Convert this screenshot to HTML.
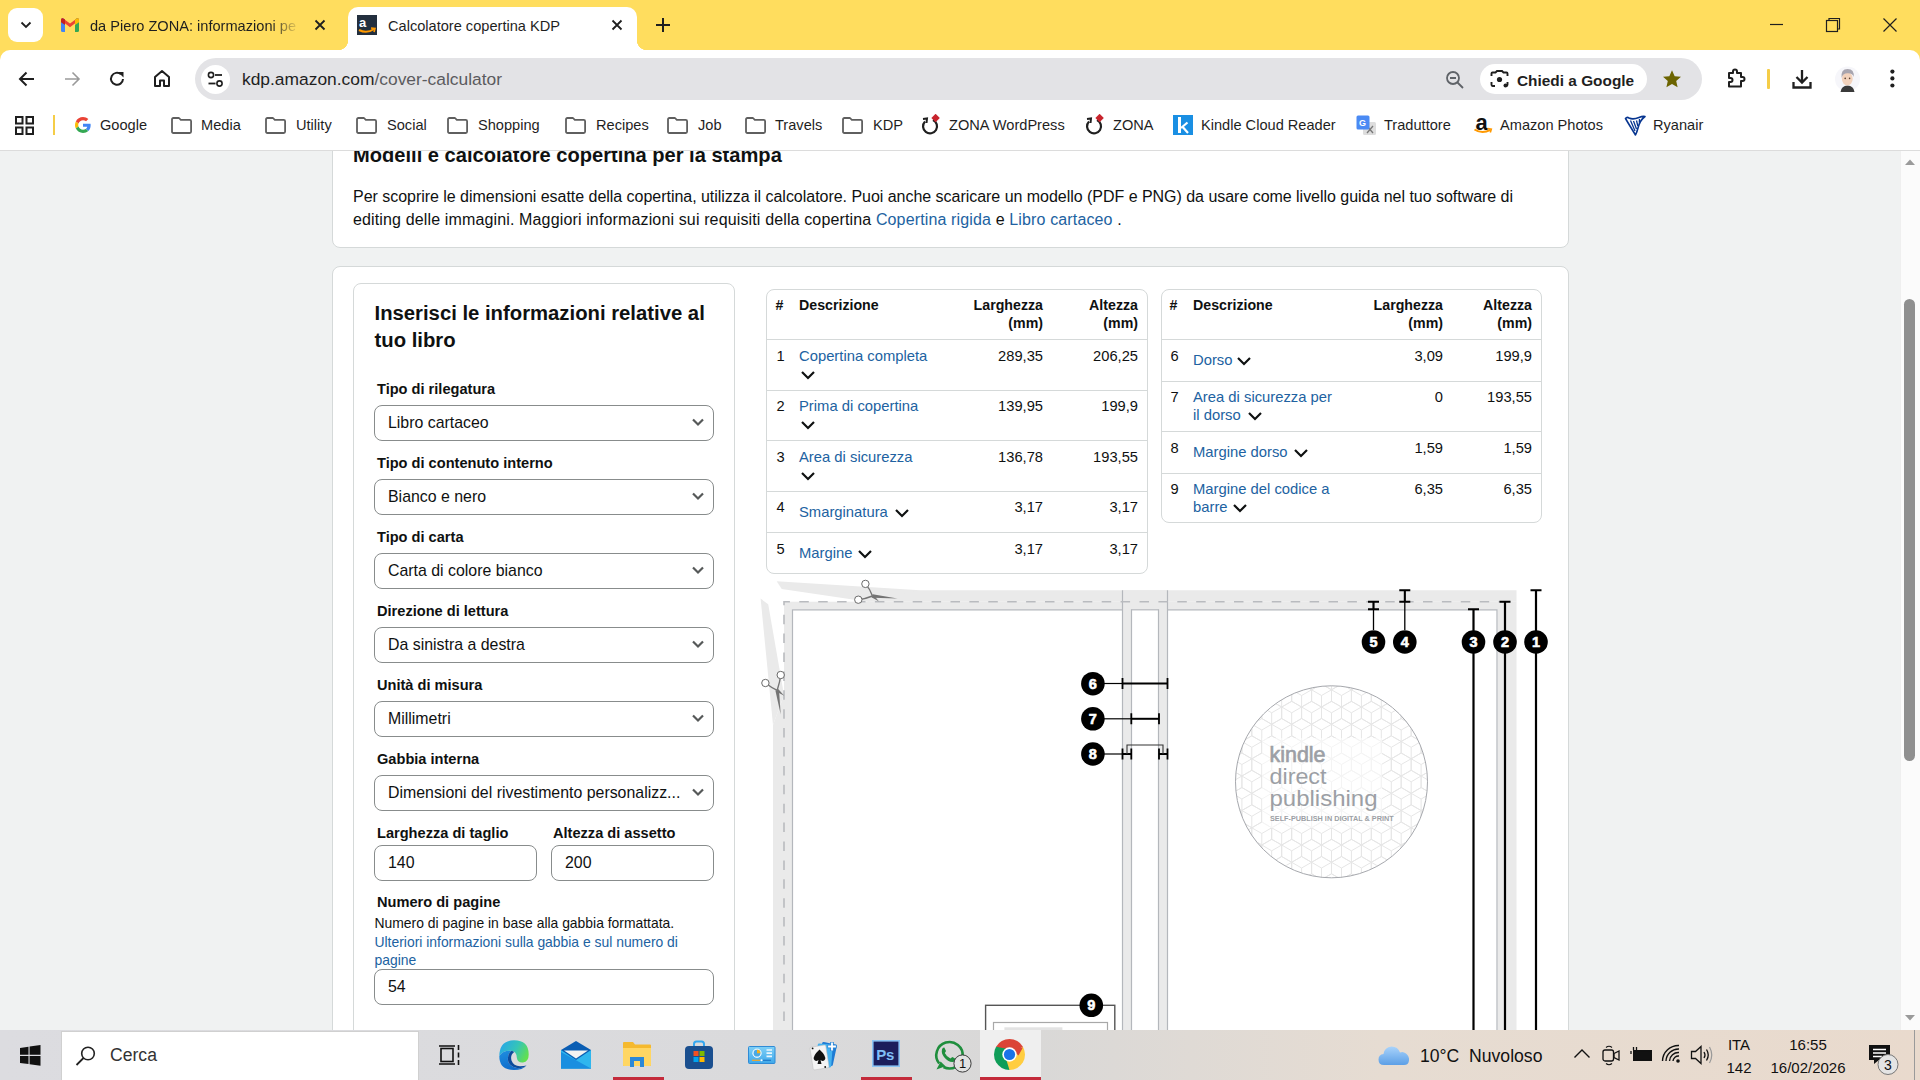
<!DOCTYPE html>
<html><head><meta charset="utf-8">
<style>
*{box-sizing:border-box;margin:0;padding:0}
html,body{width:1920px;height:1080px;overflow:hidden;font-family:"Liberation Sans",sans-serif;background:#fff;position:relative}
.abs{position:absolute}
.t{white-space:nowrap}
.tabtxt{font-size:14.6px;line-height:18px;color:#1f1f1f;white-space:nowrap}
.bm{font-size:14.6px;line-height:18px;color:#1f1f1f;white-space:nowrap;top:116px}
</style></head><body>
<div class="abs" style="left:0;top:151px;width:1900px;height:879px;background:#F0F2F2"></div>
<div class="abs" style="left:332px;top:60px;width:1237px;height:188px;background:#fff;border:1px solid #D5D9D9;border-radius:8px"></div>
<div class="abs" style="left:332px;top:266px;width:1237px;height:900px;background:#fff;border:1px solid #D5D9D9;border-radius:8px"></div>
<div class="abs" style="left:353px;top:283px;width:382px;height:900px;background:#fff;border:1px solid #D5D9D9;border-radius:8px"></div>
<div class="abs t" style="left:353px;top:141.54px;font-size:20.1px;line-height:26px;font-weight:700;color:#0F1111;">Modelli e calcolatore copertina per la stampa</div>
<div class="abs t" style="left:353px;top:186.16px;font-size:16px;line-height:21px;font-weight:400;color:#0F1111;"><span style='letter-spacing:-0.03px'>Per scoprire le dimensioni esatte della copertina, utilizza il calcolatore. Puoi anche scaricare un modello (PDF e PNG) da usare come livello guida nel tuo software di</span></div>
<div class="abs t" style="left:353px;top:208.66px;font-size:16px;line-height:21px;font-weight:400;color:#0F1111;"><span style="letter-spacing:0.14px">editing delle immagini. Maggiori informazioni sui requisiti della copertina <span style="color:#2162A1">Copertina rigida</span> e <span style="color:#2162A1">Libro cartaceo</span> .</span></div>
<div class="abs t" style="left:374.5px;top:300.07px;font-size:20.3px;line-height:26px;font-weight:700;color:#0F1111;">Inserisci le informazioni relative al</div>
<div class="abs t" style="left:374.5px;top:327.07px;font-size:20.3px;line-height:26px;font-weight:700;color:#0F1111;">tuo libro</div>
<div class="abs t" style="left:377px;top:380.34px;font-size:14.6px;line-height:19px;font-weight:700;color:#0F1111;">Tipo di rilegatura</div>
<div class="abs" style="left:374px;top:405px;width:340px;height:36px;background:#fff;border:1px solid #888C8C;border-radius:8px"></div>
<div class="abs t" style="left:388px;top:412.29px;font-size:15.9px;line-height:21px;font-weight:400;color:#0F1111;">Libro cartaceo</div>
<svg class="abs" style="left:691px;top:417px" width="14" height="10" viewBox="0 0 14 10"><path d="M2 2.5 L7 7.5 L12 2.5" fill="none" stroke="#565959" stroke-width="2.2"/></svg>
<div class="abs t" style="left:377px;top:454.34px;font-size:14.6px;line-height:19px;font-weight:700;color:#0F1111;">Tipo di contenuto interno</div>
<div class="abs" style="left:374px;top:479px;width:340px;height:36px;background:#fff;border:1px solid #888C8C;border-radius:8px"></div>
<div class="abs t" style="left:388px;top:486.29px;font-size:15.9px;line-height:21px;font-weight:400;color:#0F1111;">Bianco e nero</div>
<svg class="abs" style="left:691px;top:491px" width="14" height="10" viewBox="0 0 14 10"><path d="M2 2.5 L7 7.5 L12 2.5" fill="none" stroke="#565959" stroke-width="2.2"/></svg>
<div class="abs t" style="left:377px;top:528.34px;font-size:14.6px;line-height:19px;font-weight:700;color:#0F1111;">Tipo di carta</div>
<div class="abs" style="left:374px;top:553px;width:340px;height:36px;background:#fff;border:1px solid #888C8C;border-radius:8px"></div>
<div class="abs t" style="left:388px;top:560.29px;font-size:15.9px;line-height:21px;font-weight:400;color:#0F1111;">Carta di colore bianco</div>
<svg class="abs" style="left:691px;top:565px" width="14" height="10" viewBox="0 0 14 10"><path d="M2 2.5 L7 7.5 L12 2.5" fill="none" stroke="#565959" stroke-width="2.2"/></svg>
<div class="abs t" style="left:377px;top:602.34px;font-size:14.6px;line-height:19px;font-weight:700;color:#0F1111;">Direzione di lettura</div>
<div class="abs" style="left:374px;top:627px;width:340px;height:36px;background:#fff;border:1px solid #888C8C;border-radius:8px"></div>
<div class="abs t" style="left:388px;top:634.29px;font-size:15.9px;line-height:21px;font-weight:400;color:#0F1111;">Da sinistra a destra</div>
<svg class="abs" style="left:691px;top:639px" width="14" height="10" viewBox="0 0 14 10"><path d="M2 2.5 L7 7.5 L12 2.5" fill="none" stroke="#565959" stroke-width="2.2"/></svg>
<div class="abs t" style="left:377px;top:676.34px;font-size:14.6px;line-height:19px;font-weight:700;color:#0F1111;">Unità di misura</div>
<div class="abs" style="left:374px;top:701px;width:340px;height:36px;background:#fff;border:1px solid #888C8C;border-radius:8px"></div>
<div class="abs t" style="left:388px;top:708.29px;font-size:15.9px;line-height:21px;font-weight:400;color:#0F1111;">Millimetri</div>
<svg class="abs" style="left:691px;top:713px" width="14" height="10" viewBox="0 0 14 10"><path d="M2 2.5 L7 7.5 L12 2.5" fill="none" stroke="#565959" stroke-width="2.2"/></svg>
<div class="abs t" style="left:377px;top:750.34px;font-size:14.6px;line-height:19px;font-weight:700;color:#0F1111;">Gabbia interna</div>
<div class="abs" style="left:374px;top:775px;width:340px;height:36px;background:#fff;border:1px solid #888C8C;border-radius:8px"></div>
<div class="abs t" style="left:388px;top:782.29px;font-size:15.9px;line-height:21px;font-weight:400;color:#0F1111;">Dimensioni del rivestimento personalizz...</div>
<svg class="abs" style="left:691px;top:787px" width="14" height="10" viewBox="0 0 14 10"><path d="M2 2.5 L7 7.5 L12 2.5" fill="none" stroke="#565959" stroke-width="2.2"/></svg>
<div class="abs t" style="left:377px;top:824.34px;font-size:14.6px;line-height:19px;font-weight:700;color:#0F1111;">Larghezza di taglio</div>
<div class="abs t" style="left:553px;top:824.34px;font-size:14.6px;line-height:19px;font-weight:700;color:#0F1111;">Altezza di assetto</div>
<div class="abs" style="left:374px;top:845px;width:163px;height:36px;background:#fff;border:1px solid #888C8C;border-radius:8px"></div>
<div class="abs" style="left:551px;top:845px;width:163px;height:36px;background:#fff;border:1px solid #888C8C;border-radius:8px"></div>
<div class="abs t" style="left:388px;top:851.99px;font-size:15.9px;line-height:21px;font-weight:400;color:#0F1111;">140</div>
<div class="abs t" style="left:565px;top:851.99px;font-size:15.9px;line-height:21px;font-weight:400;color:#0F1111;">200</div>
<div class="abs t" style="left:377px;top:893.44px;font-size:14.6px;line-height:19px;font-weight:700;color:#0F1111;">Numero di pagine</div>
<div class="abs t" style="left:374.5px;top:914.18px;font-size:13.9px;line-height:18px;font-weight:400;color:#0F1111;">Numero di pagine in base alla gabbia formattata.</div>
<div class="abs t" style="left:374.5px;top:932.88px;font-size:13.9px;line-height:18px;font-weight:400;color:#2162A1;">Ulteriori informazioni sulla gabbia e sul numero di</div>
<div class="abs t" style="left:374.5px;top:950.88px;font-size:13.9px;line-height:18px;font-weight:400;color:#2162A1;">pagine</div>
<div class="abs" style="left:374px;top:969px;width:340px;height:36px;background:#fff;border:1px solid #888C8C;border-radius:8px"></div>
<div class="abs t" style="left:388px;top:975.99px;font-size:15.9px;line-height:21px;font-weight:400;color:#0F1111;">54</div>
<div class="abs" style="left:766px;top:289px;width:382px;height:285px;background:#fff;border:1px solid #D5D9D9;border-radius:8px"></div>
<div class="abs" style="left:766px;top:339px;width:382px;height:1px;background:#D5D9D9"></div>
<div class="abs" style="left:766px;top:390px;width:382px;height:1px;background:#D5D9D9"></div>
<div class="abs" style="left:766px;top:440px;width:382px;height:1px;background:#D5D9D9"></div>
<div class="abs" style="left:766px;top:491px;width:382px;height:1px;background:#D5D9D9"></div>
<div class="abs" style="left:766px;top:532px;width:382px;height:1px;background:#D5D9D9"></div>
<div class="abs t" style="left:775.5px;top:295.88px;font-size:14.2px;line-height:18px;font-weight:700;color:#0F1111;">#</div>
<div class="abs t" style="left:799px;top:295.88px;font-size:14.2px;line-height:18px;font-weight:700;color:#0F1111;">Descrizione</div>
<div class="abs t" style="left:923px;width:120px;text-align:right;top:295.88px;font-size:14.2px;line-height:18px;font-weight:700;color:#0F1111;">Larghezza</div>
<div class="abs t" style="left:923px;width:120px;text-align:right;top:313.68px;font-size:14.2px;line-height:18px;font-weight:700;color:#0F1111;">(mm)</div>
<div class="abs t" style="left:1048px;width:90px;text-align:right;top:295.88px;font-size:14.2px;line-height:18px;font-weight:700;color:#0F1111;">Altezza</div>
<div class="abs t" style="left:1048px;width:90px;text-align:right;top:313.68px;font-size:14.2px;line-height:18px;font-weight:700;color:#0F1111;">(mm)</div>
<div class="abs t" style="left:776.5px;top:346.91px;font-size:14.7px;line-height:19px;font-weight:400;color:#0F1111;">1</div>
<div class="abs t" style="left:799px;top:346.87px;font-size:14.8px;line-height:19px;font-weight:400;color:#2162A1;">Copertina completa</div>
<svg class="abs" style="left:800px;top:370px" width="16" height="10" viewBox="0 0 16 10"><path d="M2 2 L8 8 L14 2" fill="none" stroke="#0F1111" stroke-width="2.2"/></svg>
<div class="abs t" style="left:923px;width:120px;text-align:right;top:346.91px;font-size:14.7px;line-height:19px;font-weight:400;color:#0F1111;">289,35</div>
<div class="abs t" style="left:1048px;width:90px;text-align:right;top:346.91px;font-size:14.7px;line-height:19px;font-weight:400;color:#0F1111;">206,25</div>
<div class="abs t" style="left:776.5px;top:396.91px;font-size:14.7px;line-height:19px;font-weight:400;color:#0F1111;">2</div>
<div class="abs t" style="left:799px;top:396.87px;font-size:14.8px;line-height:19px;font-weight:400;color:#2162A1;">Prima di copertina</div>
<svg class="abs" style="left:800px;top:420px" width="16" height="10" viewBox="0 0 16 10"><path d="M2 2 L8 8 L14 2" fill="none" stroke="#0F1111" stroke-width="2.2"/></svg>
<div class="abs t" style="left:923px;width:120px;text-align:right;top:396.91px;font-size:14.7px;line-height:19px;font-weight:400;color:#0F1111;">139,95</div>
<div class="abs t" style="left:1048px;width:90px;text-align:right;top:396.91px;font-size:14.7px;line-height:19px;font-weight:400;color:#0F1111;">199,9</div>
<div class="abs t" style="left:776.5px;top:447.91px;font-size:14.7px;line-height:19px;font-weight:400;color:#0F1111;">3</div>
<div class="abs t" style="left:799px;top:447.87px;font-size:14.8px;line-height:19px;font-weight:400;color:#2162A1;">Area di sicurezza</div>
<svg class="abs" style="left:800px;top:471px" width="16" height="10" viewBox="0 0 16 10"><path d="M2 2 L8 8 L14 2" fill="none" stroke="#0F1111" stroke-width="2.2"/></svg>
<div class="abs t" style="left:923px;width:120px;text-align:right;top:447.91px;font-size:14.7px;line-height:19px;font-weight:400;color:#0F1111;">136,78</div>
<div class="abs t" style="left:1048px;width:90px;text-align:right;top:447.91px;font-size:14.7px;line-height:19px;font-weight:400;color:#0F1111;">193,55</div>
<div class="abs t" style="left:776.5px;top:497.91px;font-size:14.7px;line-height:19px;font-weight:400;color:#0F1111;">4</div>
<div class="abs t" style="left:799px;top:503.37px;font-size:14.8px;line-height:19px;font-weight:400;color:#2162A1;">Smarginatura</div>
<svg class="abs" style="left:894px;top:508px" width="16" height="10" viewBox="0 0 16 10"><path d="M2 2 L8 8 L14 2" fill="none" stroke="#0F1111" stroke-width="2.2"/></svg>
<div class="abs t" style="left:923px;width:120px;text-align:right;top:497.91px;font-size:14.7px;line-height:19px;font-weight:400;color:#0F1111;">3,17</div>
<div class="abs t" style="left:1048px;width:90px;text-align:right;top:497.91px;font-size:14.7px;line-height:19px;font-weight:400;color:#0F1111;">3,17</div>
<div class="abs t" style="left:776.5px;top:539.51px;font-size:14.7px;line-height:19px;font-weight:400;color:#0F1111;">5</div>
<div class="abs t" style="left:799px;top:543.67px;font-size:14.8px;line-height:19px;font-weight:400;color:#2162A1;">Margine</div>
<svg class="abs" style="left:857px;top:549px" width="16" height="10" viewBox="0 0 16 10"><path d="M2 2 L8 8 L14 2" fill="none" stroke="#0F1111" stroke-width="2.2"/></svg>
<div class="abs t" style="left:923px;width:120px;text-align:right;top:539.51px;font-size:14.7px;line-height:19px;font-weight:400;color:#0F1111;">3,17</div>
<div class="abs t" style="left:1048px;width:90px;text-align:right;top:539.51px;font-size:14.7px;line-height:19px;font-weight:400;color:#0F1111;">3,17</div>
<div class="abs" style="left:1161px;top:289px;width:381px;height:234px;background:#fff;border:1px solid #D5D9D9;border-radius:8px"></div>
<div class="abs" style="left:1161px;top:339px;width:381px;height:1px;background:#D5D9D9"></div>
<div class="abs" style="left:1161px;top:381px;width:381px;height:1px;background:#D5D9D9"></div>
<div class="abs" style="left:1161px;top:431px;width:381px;height:1px;background:#D5D9D9"></div>
<div class="abs" style="left:1161px;top:473px;width:381px;height:1px;background:#D5D9D9"></div>
<div class="abs t" style="left:1169.5px;top:295.88px;font-size:14.2px;line-height:18px;font-weight:700;color:#0F1111;">#</div>
<div class="abs t" style="left:1193px;top:295.88px;font-size:14.2px;line-height:18px;font-weight:700;color:#0F1111;">Descrizione</div>
<div class="abs t" style="left:1323px;width:120px;text-align:right;top:295.88px;font-size:14.2px;line-height:18px;font-weight:700;color:#0F1111;">Larghezza</div>
<div class="abs t" style="left:1323px;width:120px;text-align:right;top:313.68px;font-size:14.2px;line-height:18px;font-weight:700;color:#0F1111;">(mm)</div>
<div class="abs t" style="left:1442px;width:90px;text-align:right;top:295.88px;font-size:14.2px;line-height:18px;font-weight:700;color:#0F1111;">Altezza</div>
<div class="abs t" style="left:1442px;width:90px;text-align:right;top:313.68px;font-size:14.2px;line-height:18px;font-weight:700;color:#0F1111;">(mm)</div>
<div class="abs t" style="left:1170.5px;top:346.91px;font-size:14.7px;line-height:19px;font-weight:400;color:#0F1111;">6</div>
<div class="abs t" style="left:1193px;top:350.57px;font-size:14.8px;line-height:19px;font-weight:400;color:#2162A1;">Dorso</div>
<svg class="abs" style="left:1236px;top:356px" width="16" height="10" viewBox="0 0 16 10"><path d="M2 2 L8 8 L14 2" fill="none" stroke="#0F1111" stroke-width="2.2"/></svg>
<div class="abs t" style="left:1323px;width:120px;text-align:right;top:346.91px;font-size:14.7px;line-height:19px;font-weight:400;color:#0F1111;">3,09</div>
<div class="abs t" style="left:1442px;width:90px;text-align:right;top:346.91px;font-size:14.7px;line-height:19px;font-weight:400;color:#0F1111;">199,9</div>
<div class="abs t" style="left:1170.5px;top:387.61px;font-size:14.7px;line-height:19px;font-weight:400;color:#0F1111;">7</div>
<div class="abs t" style="left:1193px;top:387.87px;font-size:14.8px;line-height:19px;font-weight:400;color:#2162A1;">Area di sicurezza per</div>
<div class="abs t" style="left:1193px;top:405.57px;font-size:14.8px;line-height:19px;font-weight:400;color:#2162A1;">il dorso</div>
<svg class="abs" style="left:1247px;top:411px" width="16" height="10" viewBox="0 0 16 10"><path d="M2 2 L8 8 L14 2" fill="none" stroke="#0F1111" stroke-width="2.2"/></svg>
<div class="abs t" style="left:1323px;width:120px;text-align:right;top:387.61px;font-size:14.7px;line-height:19px;font-weight:400;color:#0F1111;">0</div>
<div class="abs t" style="left:1442px;width:90px;text-align:right;top:387.61px;font-size:14.7px;line-height:19px;font-weight:400;color:#0F1111;">193,55</div>
<div class="abs t" style="left:1170.5px;top:438.71px;font-size:14.7px;line-height:19px;font-weight:400;color:#0F1111;">8</div>
<div class="abs t" style="left:1193px;top:442.57px;font-size:14.8px;line-height:19px;font-weight:400;color:#2162A1;">Margine dorso</div>
<svg class="abs" style="left:1293px;top:448px" width="16" height="10" viewBox="0 0 16 10"><path d="M2 2 L8 8 L14 2" fill="none" stroke="#0F1111" stroke-width="2.2"/></svg>
<div class="abs t" style="left:1323px;width:120px;text-align:right;top:438.71px;font-size:14.7px;line-height:19px;font-weight:400;color:#0F1111;">1,59</div>
<div class="abs t" style="left:1442px;width:90px;text-align:right;top:438.71px;font-size:14.7px;line-height:19px;font-weight:400;color:#0F1111;">1,59</div>
<div class="abs t" style="left:1170.5px;top:479.91px;font-size:14.7px;line-height:19px;font-weight:400;color:#0F1111;">9</div>
<div class="abs t" style="left:1193px;top:479.87px;font-size:14.8px;line-height:19px;font-weight:400;color:#2162A1;">Margine del codice a</div>
<div class="abs t" style="left:1193px;top:497.87px;font-size:14.8px;line-height:19px;font-weight:400;color:#2162A1;">barre</div>
<svg class="abs" style="left:1232px;top:503px" width="16" height="10" viewBox="0 0 16 10"><path d="M2 2 L8 8 L14 2" fill="none" stroke="#0F1111" stroke-width="2.2"/></svg>
<div class="abs t" style="left:1323px;width:120px;text-align:right;top:479.91px;font-size:14.7px;line-height:19px;font-weight:400;color:#0F1111;">6,35</div>
<div class="abs t" style="left:1442px;width:90px;text-align:right;top:479.91px;font-size:14.7px;line-height:19px;font-weight:400;color:#0F1111;">6,35</div>
<svg class="abs" style="left:755px;top:575px" width="813" height="455" viewBox="755 575 813 455"><rect x="784" y="601.7" width="732.5" height="440" fill="#EAEAEA"/><polygon points="860,590.3 1516.5,590.3 1516.5,601.7 868,601.7" fill="#EAEAEA"/><polygon points="773,725 784,695 784,1040 773,1040" fill="#EAEAEA"/><polygon points="776.7,581.2 920,590.3 868,601.7 781.7,588.9" fill="#EAEAEA"/><polygon points="760.6,598.6 768.2,604.2 784,695 773,725" fill="#EAEAEA"/><rect x="792" y="609.3" width="705.5" height="440" fill="#fff"/><path d="M792.5 1040 V609.8 H1497 V1040" fill="none" stroke="#B4B7BC" stroke-width="1.2"/><rect x="1122.3" y="590.3" width="45.5" height="450" fill="#EAEAEA"/><rect x="1131.5" y="609.3" width="26.5" height="440" fill="#fff"/><path d="M1122.5 590.3 V1040 M1167.5 590.3 V1040 M1131.5 609.3 V1040 M1158.5 609.3 V1040" stroke="#B4B7BC" stroke-width="1.2"/><path d="M1131.5 609.8 H1158.5" stroke="#B4B7BC" stroke-width="1.2"/><path d="M784 1040 V601.7 H1505 V1040" fill="none" stroke="#B9BBBF" stroke-width="1.6" stroke-dasharray="9.5 9.4"/><polygon points="872.3,597.8 897.5,598.5 872.7,594.2" fill="#747474"/><polygon points="871.5,597.2 879.0,601.4 873.5,594.8" fill="#747474"/><path d="M865.4 583.9 Q870.0 589.0 872.5 596.0 M858.3 599.7 Q865.4 598.9 872.5 596.0" fill="none" stroke="#747474" stroke-width="1.4"/><circle cx="865.4" cy="583.9" r="3.7" fill="#fff" stroke="#6a6a6a" stroke-width="1"/><circle cx="858.3" cy="599.7" r="3.7" fill="#fff" stroke="#6a6a6a" stroke-width="1"/><polygon points="775.4,690.6 780.7,714.6 779.0,690.0" fill="#747474"/><polygon points="776.2,691.6 784.2,695.8 778.2,689.0" fill="#747474"/><path d="M780.7 675.0 Q780.0 681.6 777.2 690.3 M765.4 683.0 Q771.3 687.6 777.2 690.3" fill="none" stroke="#747474" stroke-width="1.4"/><circle cx="780.7" cy="675" r="3.7" fill="#fff" stroke="#6a6a6a" stroke-width="1"/><circle cx="765.4" cy="683" r="3.7" fill="#fff" stroke="#6a6a6a" stroke-width="1"/><path d="M1104 683.5 H1122.5" stroke="#000" stroke-width="1.2"/><path d="M1122.5 683.5 H1167.5" stroke="#000" stroke-width="2"/><path d="M1122.5 678 V689 M1167.5 678 V689" stroke="#000" stroke-width="1.8"/><path d="M1104 718.8 H1131.3" stroke="#000" stroke-width="1.2"/><path d="M1131.3 718.8 H1159" stroke="#000" stroke-width="2"/><path d="M1131.3 713.3 V724.3 M1159 713.3 V724.3" stroke="#000" stroke-width="1.8"/><path d="M1104 754 H1122.5" stroke="#000" stroke-width="1.2"/><path d="M1122.5 754 H1131.3 M1159 754 H1167.5" stroke="#000" stroke-width="2"/><path d="M1122.5 748.5 V759.5 M1131.3 748.5 V759.5 M1159 748.5 V759.5 M1167.5 748.5 V759.5" stroke="#000" stroke-width="1.8"/><path d="M1127 754 V745 H1163 V754" fill="none" stroke="#333" stroke-width="1.1"/><circle cx="1092.9" cy="683.7" r="11.8" fill="#000"/><text x="1092.9" y="688.8000000000001" text-anchor="middle" font-family="Liberation Sans" font-weight="700" font-size="14.5" fill="#fff" stroke="#fff" stroke-width="0.6">6</text><circle cx="1092.9" cy="718.8" r="11.8" fill="#000"/><text x="1092.9" y="723.9" text-anchor="middle" font-family="Liberation Sans" font-weight="700" font-size="14.5" fill="#fff" stroke="#fff" stroke-width="0.6">7</text><circle cx="1092.9" cy="754" r="11.8" fill="#000"/><text x="1092.9" y="759.1" text-anchor="middle" font-family="Liberation Sans" font-weight="700" font-size="14.5" fill="#fff" stroke="#fff" stroke-width="0.6">8</text><path d="M1373.5 630 V601.7" stroke="#000" stroke-width="1.3"/><path d="M1373.5 601.7 V609.3" stroke="#000" stroke-width="2"/><path d="M1368 601.7 H1379 M1368 609.3 H1379" stroke="#000" stroke-width="2"/><path d="M1404.8 630 V590.3" stroke="#000" stroke-width="1.3"/><path d="M1404.8 590.3 V601.7" stroke="#000" stroke-width="2"/><path d="M1399.3 590.3 H1410.3 M1399.3 601.7 H1410.3" stroke="#000" stroke-width="2"/><path d="M1473.5 609.3 V1040 M1505 601.7 V1040 M1536 590.3 V1040" stroke="#000" stroke-width="2.2"/><path d="M1468 609.3 H1479 M1499.5 601.7 H1510.5 M1530.5 590.3 H1541.5" stroke="#000" stroke-width="2"/><circle cx="1373.5" cy="642" r="11.8" fill="#000"/><text x="1373.5" y="647.1" text-anchor="middle" font-family="Liberation Sans" font-weight="700" font-size="14.5" fill="#fff" stroke="#fff" stroke-width="0.6">5</text><circle cx="1404.8" cy="642" r="11.8" fill="#000"/><text x="1404.8" y="647.1" text-anchor="middle" font-family="Liberation Sans" font-weight="700" font-size="14.5" fill="#fff" stroke="#fff" stroke-width="0.6">4</text><circle cx="1473.5" cy="642" r="11.8" fill="#000"/><text x="1473.5" y="647.1" text-anchor="middle" font-family="Liberation Sans" font-weight="700" font-size="14.5" fill="#fff" stroke="#fff" stroke-width="0.6">3</text><circle cx="1505" cy="642" r="11.8" fill="#000"/><text x="1505" y="647.1" text-anchor="middle" font-family="Liberation Sans" font-weight="700" font-size="14.5" fill="#fff" stroke="#fff" stroke-width="0.6">2</text><circle cx="1536" cy="642" r="11.8" fill="#000"/><text x="1536" y="647.1" text-anchor="middle" font-family="Liberation Sans" font-weight="700" font-size="14.5" fill="#fff" stroke="#fff" stroke-width="0.6">1</text><rect x="985.6" y="1005.3" width="129.2" height="60" fill="#fff" stroke="#555" stroke-width="1.4"/><rect x="993.5" y="1022.5" width="114" height="40" fill="#fff" stroke="#A8A8A8" stroke-width="1.2"/><rect x="1004.4" y="1027.3" width="58" height="5" fill="#E3E3E3"/><circle cx="1091.3" cy="1005.3" r="11.8" fill="#000"/><text x="1091.3" y="1010.4" text-anchor="middle" font-family="Liberation Sans" font-weight="700" font-size="14.5" fill="#fff" stroke="#fff" stroke-width="0.6">9</text><clipPath id="lc"><circle cx="1331.5" cy="781.8" r="96"/></clipPath><g clip-path="url(#lc)" fill="none" stroke="#E6E6E6" stroke-width="1"><polygon points="1221.9,684.0 1212.0,689.8 1202.0,684.0 1202.0,672.5 1212.0,666.8 1221.9,672.5"/><path d="M1212.0 678.3 L1212.0 689.8 M1212.0 678.3 L1221.9 672.5 M1212.0 678.3 L1202.0 672.5"/><polygon points="1241.9,684.0 1231.9,689.8 1221.9,684.0 1221.9,672.5 1231.9,666.8 1241.9,672.5"/><path d="M1231.9 678.3 L1231.9 689.8 M1231.9 678.3 L1241.9 672.5 M1231.9 678.3 L1221.9 672.5"/><polygon points="1261.8,684.0 1251.8,689.8 1241.9,684.0 1241.9,672.5 1251.8,666.8 1261.8,672.5"/><path d="M1251.8 678.3 L1251.8 689.8 M1251.8 678.3 L1261.8 672.5 M1251.8 678.3 L1241.9 672.5"/><polygon points="1281.7,684.0 1271.7,689.8 1261.8,684.0 1261.8,672.5 1271.7,666.8 1281.7,672.5"/><path d="M1271.7 678.3 L1271.7 689.8 M1271.7 678.3 L1281.7 672.5 M1271.7 678.3 L1261.8 672.5"/><polygon points="1301.6,684.0 1291.7,689.8 1281.7,684.0 1281.7,672.5 1291.7,666.8 1301.6,672.5"/><path d="M1291.7 678.3 L1291.7 689.8 M1291.7 678.3 L1301.6 672.5 M1291.7 678.3 L1281.7 672.5"/><polygon points="1321.5,684.0 1311.6,689.8 1301.6,684.0 1301.6,672.5 1311.6,666.8 1321.5,672.5"/><path d="M1311.6 678.3 L1311.6 689.8 M1311.6 678.3 L1321.5 672.5 M1311.6 678.3 L1301.6 672.5"/><polygon points="1341.5,684.0 1331.5,689.8 1321.5,684.0 1321.5,672.5 1331.5,666.8 1341.5,672.5"/><path d="M1331.5 678.3 L1331.5 689.8 M1331.5 678.3 L1341.5 672.5 M1331.5 678.3 L1321.5 672.5"/><polygon points="1361.4,684.0 1351.4,689.8 1341.5,684.0 1341.5,672.5 1351.4,666.8 1361.4,672.5"/><path d="M1351.4 678.3 L1351.4 689.8 M1351.4 678.3 L1361.4 672.5 M1351.4 678.3 L1341.5 672.5"/><polygon points="1381.3,684.0 1371.3,689.8 1361.4,684.0 1361.4,672.5 1371.3,666.8 1381.3,672.5"/><path d="M1371.3 678.3 L1371.3 689.8 M1371.3 678.3 L1381.3 672.5 M1371.3 678.3 L1361.4 672.5"/><polygon points="1401.2,684.0 1391.3,689.8 1381.3,684.0 1381.3,672.5 1391.3,666.8 1401.2,672.5"/><path d="M1391.3 678.3 L1391.3 689.8 M1391.3 678.3 L1401.2 672.5 M1391.3 678.3 L1381.3 672.5"/><polygon points="1421.1,684.0 1411.2,689.8 1401.2,684.0 1401.2,672.5 1411.2,666.8 1421.1,672.5"/><path d="M1411.2 678.3 L1411.2 689.8 M1411.2 678.3 L1421.1 672.5 M1411.2 678.3 L1401.2 672.5"/><polygon points="1441.1,684.0 1431.1,689.8 1421.1,684.0 1421.1,672.5 1431.1,666.8 1441.1,672.5"/><path d="M1431.1 678.3 L1431.1 689.8 M1431.1 678.3 L1441.1 672.5 M1431.1 678.3 L1421.1 672.5"/><polygon points="1461.0,684.0 1451.0,689.8 1441.1,684.0 1441.1,672.5 1451.0,666.8 1461.0,672.5"/><path d="M1451.0 678.3 L1451.0 689.8 M1451.0 678.3 L1461.0 672.5 M1451.0 678.3 L1441.1 672.5"/><polygon points="1231.9,701.3 1221.9,707.0 1212.0,701.3 1212.0,689.8 1221.9,684.0 1231.9,689.8"/><path d="M1221.9 695.5 L1221.9 707.0 M1221.9 695.5 L1231.9 689.8 M1221.9 695.5 L1212.0 689.8"/><polygon points="1251.8,701.3 1241.9,707.0 1231.9,701.3 1231.9,689.8 1241.9,684.0 1251.8,689.8"/><path d="M1241.9 695.5 L1241.9 707.0 M1241.9 695.5 L1251.8 689.8 M1241.9 695.5 L1231.9 689.8"/><polygon points="1271.7,701.3 1261.8,707.0 1251.8,701.3 1251.8,689.8 1261.8,684.0 1271.7,689.8"/><path d="M1261.8 695.5 L1261.8 707.0 M1261.8 695.5 L1271.7 689.8 M1261.8 695.5 L1251.8 689.8"/><polygon points="1291.7,701.3 1281.7,707.0 1271.7,701.3 1271.7,689.8 1281.7,684.0 1291.7,689.8"/><path d="M1281.7 695.5 L1281.7 707.0 M1281.7 695.5 L1291.7 689.8 M1281.7 695.5 L1271.7 689.8"/><polygon points="1311.6,701.3 1301.6,707.0 1291.7,701.3 1291.7,689.8 1301.6,684.0 1311.6,689.8"/><path d="M1301.6 695.5 L1301.6 707.0 M1301.6 695.5 L1311.6 689.8 M1301.6 695.5 L1291.7 689.8"/><polygon points="1331.5,701.3 1321.5,707.0 1311.6,701.3 1311.6,689.8 1321.5,684.0 1331.5,689.8"/><path d="M1321.5 695.5 L1321.5 707.0 M1321.5 695.5 L1331.5 689.8 M1321.5 695.5 L1311.6 689.8"/><polygon points="1351.4,701.3 1341.5,707.0 1331.5,701.3 1331.5,689.8 1341.5,684.0 1351.4,689.8"/><path d="M1341.5 695.5 L1341.5 707.0 M1341.5 695.5 L1351.4 689.8 M1341.5 695.5 L1331.5 689.8"/><polygon points="1371.3,701.3 1361.4,707.0 1351.4,701.3 1351.4,689.8 1361.4,684.0 1371.3,689.8"/><path d="M1361.4 695.5 L1361.4 707.0 M1361.4 695.5 L1371.3 689.8 M1361.4 695.5 L1351.4 689.8"/><polygon points="1391.3,701.3 1381.3,707.0 1371.3,701.3 1371.3,689.8 1381.3,684.0 1391.3,689.8"/><path d="M1381.3 695.5 L1381.3 707.0 M1381.3 695.5 L1391.3 689.8 M1381.3 695.5 L1371.3 689.8"/><polygon points="1411.2,701.3 1401.2,707.0 1391.3,701.3 1391.3,689.8 1401.2,684.0 1411.2,689.8"/><path d="M1401.2 695.5 L1401.2 707.0 M1401.2 695.5 L1411.2 689.8 M1401.2 695.5 L1391.3 689.8"/><polygon points="1431.1,701.3 1421.1,707.0 1411.2,701.3 1411.2,689.8 1421.1,684.0 1431.1,689.8"/><path d="M1421.1 695.5 L1421.1 707.0 M1421.1 695.5 L1431.1 689.8 M1421.1 695.5 L1411.2 689.8"/><polygon points="1451.0,701.3 1441.1,707.0 1431.1,701.3 1431.1,689.8 1441.1,684.0 1451.0,689.8"/><path d="M1441.1 695.5 L1441.1 707.0 M1441.1 695.5 L1451.0 689.8 M1441.1 695.5 L1431.1 689.8"/><polygon points="1470.9,701.3 1461.0,707.0 1451.0,701.3 1451.0,689.8 1461.0,684.0 1470.9,689.8"/><path d="M1461.0 695.5 L1461.0 707.0 M1461.0 695.5 L1470.9 689.8 M1461.0 695.5 L1451.0 689.8"/><polygon points="1221.9,718.5 1212.0,724.3 1202.0,718.5 1202.0,707.0 1212.0,701.3 1221.9,707.0"/><path d="M1212.0 712.8 L1212.0 724.3 M1212.0 712.8 L1221.9 707.0 M1212.0 712.8 L1202.0 707.0"/><polygon points="1241.9,718.5 1231.9,724.3 1221.9,718.5 1221.9,707.0 1231.9,701.3 1241.9,707.0"/><path d="M1231.9 712.8 L1231.9 724.3 M1231.9 712.8 L1241.9 707.0 M1231.9 712.8 L1221.9 707.0"/><polygon points="1261.8,718.5 1251.8,724.3 1241.9,718.5 1241.9,707.0 1251.8,701.3 1261.8,707.0"/><path d="M1251.8 712.8 L1251.8 724.3 M1251.8 712.8 L1261.8 707.0 M1251.8 712.8 L1241.9 707.0"/><polygon points="1281.7,718.5 1271.7,724.3 1261.8,718.5 1261.8,707.0 1271.7,701.3 1281.7,707.0"/><path d="M1271.7 712.8 L1271.7 724.3 M1271.7 712.8 L1281.7 707.0 M1271.7 712.8 L1261.8 707.0"/><polygon points="1301.6,718.5 1291.7,724.3 1281.7,718.5 1281.7,707.0 1291.7,701.3 1301.6,707.0"/><path d="M1291.7 712.8 L1291.7 724.3 M1291.7 712.8 L1301.6 707.0 M1291.7 712.8 L1281.7 707.0"/><polygon points="1321.5,718.5 1311.6,724.3 1301.6,718.5 1301.6,707.0 1311.6,701.3 1321.5,707.0"/><path d="M1311.6 712.8 L1311.6 724.3 M1311.6 712.8 L1321.5 707.0 M1311.6 712.8 L1301.6 707.0"/><polygon points="1341.5,718.5 1331.5,724.3 1321.5,718.5 1321.5,707.0 1331.5,701.3 1341.5,707.0"/><path d="M1331.5 712.8 L1331.5 724.3 M1331.5 712.8 L1341.5 707.0 M1331.5 712.8 L1321.5 707.0"/><polygon points="1361.4,718.5 1351.4,724.3 1341.5,718.5 1341.5,707.0 1351.4,701.3 1361.4,707.0"/><path d="M1351.4 712.8 L1351.4 724.3 M1351.4 712.8 L1361.4 707.0 M1351.4 712.8 L1341.5 707.0"/><polygon points="1381.3,718.5 1371.3,724.3 1361.4,718.5 1361.4,707.0 1371.3,701.3 1381.3,707.0"/><path d="M1371.3 712.8 L1371.3 724.3 M1371.3 712.8 L1381.3 707.0 M1371.3 712.8 L1361.4 707.0"/><polygon points="1401.2,718.5 1391.3,724.3 1381.3,718.5 1381.3,707.0 1391.3,701.3 1401.2,707.0"/><path d="M1391.3 712.8 L1391.3 724.3 M1391.3 712.8 L1401.2 707.0 M1391.3 712.8 L1381.3 707.0"/><polygon points="1421.1,718.5 1411.2,724.3 1401.2,718.5 1401.2,707.0 1411.2,701.3 1421.1,707.0"/><path d="M1411.2 712.8 L1411.2 724.3 M1411.2 712.8 L1421.1 707.0 M1411.2 712.8 L1401.2 707.0"/><polygon points="1441.1,718.5 1431.1,724.3 1421.1,718.5 1421.1,707.0 1431.1,701.3 1441.1,707.0"/><path d="M1431.1 712.8 L1431.1 724.3 M1431.1 712.8 L1441.1 707.0 M1431.1 712.8 L1421.1 707.0"/><polygon points="1461.0,718.5 1451.0,724.3 1441.1,718.5 1441.1,707.0 1451.0,701.3 1461.0,707.0"/><path d="M1451.0 712.8 L1451.0 724.3 M1451.0 712.8 L1461.0 707.0 M1451.0 712.8 L1441.1 707.0"/><polygon points="1231.9,735.8 1221.9,741.5 1212.0,735.8 1212.0,724.3 1221.9,718.5 1231.9,724.3"/><path d="M1221.9 730.0 L1221.9 741.5 M1221.9 730.0 L1231.9 724.3 M1221.9 730.0 L1212.0 724.3"/><polygon points="1251.8,735.8 1241.9,741.5 1231.9,735.8 1231.9,724.3 1241.9,718.5 1251.8,724.3"/><path d="M1241.9 730.0 L1241.9 741.5 M1241.9 730.0 L1251.8 724.3 M1241.9 730.0 L1231.9 724.3"/><polygon points="1271.7,735.8 1261.8,741.5 1251.8,735.8 1251.8,724.3 1261.8,718.5 1271.7,724.3"/><path d="M1261.8 730.0 L1261.8 741.5 M1261.8 730.0 L1271.7 724.3 M1261.8 730.0 L1251.8 724.3"/><polygon points="1291.7,735.8 1281.7,741.5 1271.7,735.8 1271.7,724.3 1281.7,718.5 1291.7,724.3"/><path d="M1281.7 730.0 L1281.7 741.5 M1281.7 730.0 L1291.7 724.3 M1281.7 730.0 L1271.7 724.3"/><polygon points="1311.6,735.8 1301.6,741.5 1291.7,735.8 1291.7,724.3 1301.6,718.5 1311.6,724.3"/><path d="M1301.6 730.0 L1301.6 741.5 M1301.6 730.0 L1311.6 724.3 M1301.6 730.0 L1291.7 724.3"/><polygon points="1331.5,735.8 1321.5,741.5 1311.6,735.8 1311.6,724.3 1321.5,718.5 1331.5,724.3"/><path d="M1321.5 730.0 L1321.5 741.5 M1321.5 730.0 L1331.5 724.3 M1321.5 730.0 L1311.6 724.3"/><polygon points="1351.4,735.8 1341.5,741.5 1331.5,735.8 1331.5,724.3 1341.5,718.5 1351.4,724.3"/><path d="M1341.5 730.0 L1341.5 741.5 M1341.5 730.0 L1351.4 724.3 M1341.5 730.0 L1331.5 724.3"/><polygon points="1371.3,735.8 1361.4,741.5 1351.4,735.8 1351.4,724.3 1361.4,718.5 1371.3,724.3"/><path d="M1361.4 730.0 L1361.4 741.5 M1361.4 730.0 L1371.3 724.3 M1361.4 730.0 L1351.4 724.3"/><polygon points="1391.3,735.8 1381.3,741.5 1371.3,735.8 1371.3,724.3 1381.3,718.5 1391.3,724.3"/><path d="M1381.3 730.0 L1381.3 741.5 M1381.3 730.0 L1391.3 724.3 M1381.3 730.0 L1371.3 724.3"/><polygon points="1411.2,735.8 1401.2,741.5 1391.3,735.8 1391.3,724.3 1401.2,718.5 1411.2,724.3"/><path d="M1401.2 730.0 L1401.2 741.5 M1401.2 730.0 L1411.2 724.3 M1401.2 730.0 L1391.3 724.3"/><polygon points="1431.1,735.8 1421.1,741.5 1411.2,735.8 1411.2,724.3 1421.1,718.5 1431.1,724.3"/><path d="M1421.1 730.0 L1421.1 741.5 M1421.1 730.0 L1431.1 724.3 M1421.1 730.0 L1411.2 724.3"/><polygon points="1451.0,735.8 1441.1,741.5 1431.1,735.8 1431.1,724.3 1441.1,718.5 1451.0,724.3"/><path d="M1441.1 730.0 L1441.1 741.5 M1441.1 730.0 L1451.0 724.3 M1441.1 730.0 L1431.1 724.3"/><polygon points="1470.9,735.8 1461.0,741.5 1451.0,735.8 1451.0,724.3 1461.0,718.5 1470.9,724.3"/><path d="M1461.0 730.0 L1461.0 741.5 M1461.0 730.0 L1470.9 724.3 M1461.0 730.0 L1451.0 724.3"/><polygon points="1221.9,753.0 1212.0,758.8 1202.0,753.0 1202.0,741.5 1212.0,735.8 1221.9,741.5"/><path d="M1212.0 747.3 L1212.0 758.8 M1212.0 747.3 L1221.9 741.5 M1212.0 747.3 L1202.0 741.5"/><polygon points="1241.9,753.0 1231.9,758.8 1221.9,753.0 1221.9,741.5 1231.9,735.8 1241.9,741.5"/><path d="M1231.9 747.3 L1231.9 758.8 M1231.9 747.3 L1241.9 741.5 M1231.9 747.3 L1221.9 741.5"/><polygon points="1261.8,753.0 1251.8,758.8 1241.9,753.0 1241.9,741.5 1251.8,735.8 1261.8,741.5"/><path d="M1251.8 747.3 L1251.8 758.8 M1251.8 747.3 L1261.8 741.5 M1251.8 747.3 L1241.9 741.5"/><polygon points="1281.7,753.0 1271.7,758.8 1261.8,753.0 1261.8,741.5 1271.7,735.8 1281.7,741.5"/><path d="M1271.7 747.3 L1271.7 758.8 M1271.7 747.3 L1281.7 741.5 M1271.7 747.3 L1261.8 741.5"/><polygon points="1301.6,753.0 1291.7,758.8 1281.7,753.0 1281.7,741.5 1291.7,735.8 1301.6,741.5"/><path d="M1291.7 747.3 L1291.7 758.8 M1291.7 747.3 L1301.6 741.5 M1291.7 747.3 L1281.7 741.5"/><polygon points="1321.5,753.0 1311.6,758.8 1301.6,753.0 1301.6,741.5 1311.6,735.8 1321.5,741.5"/><path d="M1311.6 747.3 L1311.6 758.8 M1311.6 747.3 L1321.5 741.5 M1311.6 747.3 L1301.6 741.5"/><polygon points="1341.5,753.0 1331.5,758.8 1321.5,753.0 1321.5,741.5 1331.5,735.8 1341.5,741.5"/><path d="M1331.5 747.3 L1331.5 758.8 M1331.5 747.3 L1341.5 741.5 M1331.5 747.3 L1321.5 741.5"/><polygon points="1361.4,753.0 1351.4,758.8 1341.5,753.0 1341.5,741.5 1351.4,735.8 1361.4,741.5"/><path d="M1351.4 747.3 L1351.4 758.8 M1351.4 747.3 L1361.4 741.5 M1351.4 747.3 L1341.5 741.5"/><polygon points="1381.3,753.0 1371.3,758.8 1361.4,753.0 1361.4,741.5 1371.3,735.8 1381.3,741.5"/><path d="M1371.3 747.3 L1371.3 758.8 M1371.3 747.3 L1381.3 741.5 M1371.3 747.3 L1361.4 741.5"/><polygon points="1401.2,753.0 1391.3,758.8 1381.3,753.0 1381.3,741.5 1391.3,735.8 1401.2,741.5"/><path d="M1391.3 747.3 L1391.3 758.8 M1391.3 747.3 L1401.2 741.5 M1391.3 747.3 L1381.3 741.5"/><polygon points="1421.1,753.0 1411.2,758.8 1401.2,753.0 1401.2,741.5 1411.2,735.8 1421.1,741.5"/><path d="M1411.2 747.3 L1411.2 758.8 M1411.2 747.3 L1421.1 741.5 M1411.2 747.3 L1401.2 741.5"/><polygon points="1441.1,753.0 1431.1,758.8 1421.1,753.0 1421.1,741.5 1431.1,735.8 1441.1,741.5"/><path d="M1431.1 747.3 L1431.1 758.8 M1431.1 747.3 L1441.1 741.5 M1431.1 747.3 L1421.1 741.5"/><polygon points="1461.0,753.0 1451.0,758.8 1441.1,753.0 1441.1,741.5 1451.0,735.8 1461.0,741.5"/><path d="M1451.0 747.3 L1451.0 758.8 M1451.0 747.3 L1461.0 741.5 M1451.0 747.3 L1441.1 741.5"/><polygon points="1231.9,770.3 1221.9,776.0 1212.0,770.3 1212.0,758.8 1221.9,753.0 1231.9,758.8"/><path d="M1221.9 764.5 L1221.9 776.0 M1221.9 764.5 L1231.9 758.8 M1221.9 764.5 L1212.0 758.8"/><polygon points="1251.8,770.3 1241.9,776.0 1231.9,770.3 1231.9,758.8 1241.9,753.0 1251.8,758.8"/><path d="M1241.9 764.5 L1241.9 776.0 M1241.9 764.5 L1251.8 758.8 M1241.9 764.5 L1231.9 758.8"/><polygon points="1271.7,770.3 1261.8,776.0 1251.8,770.3 1251.8,758.8 1261.8,753.0 1271.7,758.8"/><path d="M1261.8 764.5 L1261.8 776.0 M1261.8 764.5 L1271.7 758.8 M1261.8 764.5 L1251.8 758.8"/><polygon points="1291.7,770.3 1281.7,776.0 1271.7,770.3 1271.7,758.8 1281.7,753.0 1291.7,758.8"/><path d="M1281.7 764.5 L1281.7 776.0 M1281.7 764.5 L1291.7 758.8 M1281.7 764.5 L1271.7 758.8"/><polygon points="1311.6,770.3 1301.6,776.0 1291.7,770.3 1291.7,758.8 1301.6,753.0 1311.6,758.8"/><path d="M1301.6 764.5 L1301.6 776.0 M1301.6 764.5 L1311.6 758.8 M1301.6 764.5 L1291.7 758.8"/><polygon points="1331.5,770.3 1321.5,776.0 1311.6,770.3 1311.6,758.8 1321.5,753.0 1331.5,758.8"/><path d="M1321.5 764.5 L1321.5 776.0 M1321.5 764.5 L1331.5 758.8 M1321.5 764.5 L1311.6 758.8"/><polygon points="1351.4,770.3 1341.5,776.0 1331.5,770.3 1331.5,758.8 1341.5,753.0 1351.4,758.8"/><path d="M1341.5 764.5 L1341.5 776.0 M1341.5 764.5 L1351.4 758.8 M1341.5 764.5 L1331.5 758.8"/><polygon points="1371.3,770.3 1361.4,776.0 1351.4,770.3 1351.4,758.8 1361.4,753.0 1371.3,758.8"/><path d="M1361.4 764.5 L1361.4 776.0 M1361.4 764.5 L1371.3 758.8 M1361.4 764.5 L1351.4 758.8"/><polygon points="1391.3,770.3 1381.3,776.0 1371.3,770.3 1371.3,758.8 1381.3,753.0 1391.3,758.8"/><path d="M1381.3 764.5 L1381.3 776.0 M1381.3 764.5 L1391.3 758.8 M1381.3 764.5 L1371.3 758.8"/><polygon points="1411.2,770.3 1401.2,776.0 1391.3,770.3 1391.3,758.8 1401.2,753.0 1411.2,758.8"/><path d="M1401.2 764.5 L1401.2 776.0 M1401.2 764.5 L1411.2 758.8 M1401.2 764.5 L1391.3 758.8"/><polygon points="1431.1,770.3 1421.1,776.0 1411.2,770.3 1411.2,758.8 1421.1,753.0 1431.1,758.8"/><path d="M1421.1 764.5 L1421.1 776.0 M1421.1 764.5 L1431.1 758.8 M1421.1 764.5 L1411.2 758.8"/><polygon points="1451.0,770.3 1441.1,776.0 1431.1,770.3 1431.1,758.8 1441.1,753.0 1451.0,758.8"/><path d="M1441.1 764.5 L1441.1 776.0 M1441.1 764.5 L1451.0 758.8 M1441.1 764.5 L1431.1 758.8"/><polygon points="1470.9,770.3 1461.0,776.0 1451.0,770.3 1451.0,758.8 1461.0,753.0 1470.9,758.8"/><path d="M1461.0 764.5 L1461.0 776.0 M1461.0 764.5 L1470.9 758.8 M1461.0 764.5 L1451.0 758.8"/><polygon points="1221.9,787.5 1212.0,793.3 1202.0,787.5 1202.0,776.0 1212.0,770.3 1221.9,776.0"/><path d="M1212.0 781.8 L1212.0 793.3 M1212.0 781.8 L1221.9 776.0 M1212.0 781.8 L1202.0 776.0"/><polygon points="1241.9,787.5 1231.9,793.3 1221.9,787.5 1221.9,776.0 1231.9,770.3 1241.9,776.0"/><path d="M1231.9 781.8 L1231.9 793.3 M1231.9 781.8 L1241.9 776.0 M1231.9 781.8 L1221.9 776.0"/><polygon points="1261.8,787.5 1251.8,793.3 1241.9,787.5 1241.9,776.0 1251.8,770.3 1261.8,776.0"/><path d="M1251.8 781.8 L1251.8 793.3 M1251.8 781.8 L1261.8 776.0 M1251.8 781.8 L1241.9 776.0"/><polygon points="1281.7,787.5 1271.7,793.3 1261.8,787.5 1261.8,776.0 1271.7,770.3 1281.7,776.0"/><path d="M1271.7 781.8 L1271.7 793.3 M1271.7 781.8 L1281.7 776.0 M1271.7 781.8 L1261.8 776.0"/><polygon points="1301.6,787.5 1291.7,793.3 1281.7,787.5 1281.7,776.0 1291.7,770.3 1301.6,776.0"/><path d="M1291.7 781.8 L1291.7 793.3 M1291.7 781.8 L1301.6 776.0 M1291.7 781.8 L1281.7 776.0"/><polygon points="1321.5,787.5 1311.6,793.3 1301.6,787.5 1301.6,776.0 1311.6,770.3 1321.5,776.0"/><path d="M1311.6 781.8 L1311.6 793.3 M1311.6 781.8 L1321.5 776.0 M1311.6 781.8 L1301.6 776.0"/><polygon points="1341.5,787.5 1331.5,793.3 1321.5,787.5 1321.5,776.0 1331.5,770.3 1341.5,776.0"/><path d="M1331.5 781.8 L1331.5 793.3 M1331.5 781.8 L1341.5 776.0 M1331.5 781.8 L1321.5 776.0"/><polygon points="1361.4,787.5 1351.4,793.3 1341.5,787.5 1341.5,776.0 1351.4,770.3 1361.4,776.0"/><path d="M1351.4 781.8 L1351.4 793.3 M1351.4 781.8 L1361.4 776.0 M1351.4 781.8 L1341.5 776.0"/><polygon points="1381.3,787.5 1371.3,793.3 1361.4,787.5 1361.4,776.0 1371.3,770.3 1381.3,776.0"/><path d="M1371.3 781.8 L1371.3 793.3 M1371.3 781.8 L1381.3 776.0 M1371.3 781.8 L1361.4 776.0"/><polygon points="1401.2,787.5 1391.3,793.3 1381.3,787.5 1381.3,776.0 1391.3,770.3 1401.2,776.0"/><path d="M1391.3 781.8 L1391.3 793.3 M1391.3 781.8 L1401.2 776.0 M1391.3 781.8 L1381.3 776.0"/><polygon points="1421.1,787.5 1411.2,793.3 1401.2,787.5 1401.2,776.0 1411.2,770.3 1421.1,776.0"/><path d="M1411.2 781.8 L1411.2 793.3 M1411.2 781.8 L1421.1 776.0 M1411.2 781.8 L1401.2 776.0"/><polygon points="1441.1,787.5 1431.1,793.3 1421.1,787.5 1421.1,776.0 1431.1,770.3 1441.1,776.0"/><path d="M1431.1 781.8 L1431.1 793.3 M1431.1 781.8 L1441.1 776.0 M1431.1 781.8 L1421.1 776.0"/><polygon points="1461.0,787.5 1451.0,793.3 1441.1,787.5 1441.1,776.0 1451.0,770.3 1461.0,776.0"/><path d="M1451.0 781.8 L1451.0 793.3 M1451.0 781.8 L1461.0 776.0 M1451.0 781.8 L1441.1 776.0"/><polygon points="1231.9,804.8 1221.9,810.5 1212.0,804.8 1212.0,793.3 1221.9,787.5 1231.9,793.3"/><path d="M1221.9 799.0 L1221.9 810.5 M1221.9 799.0 L1231.9 793.3 M1221.9 799.0 L1212.0 793.3"/><polygon points="1251.8,804.8 1241.9,810.5 1231.9,804.8 1231.9,793.3 1241.9,787.5 1251.8,793.3"/><path d="M1241.9 799.0 L1241.9 810.5 M1241.9 799.0 L1251.8 793.3 M1241.9 799.0 L1231.9 793.3"/><polygon points="1271.7,804.8 1261.8,810.5 1251.8,804.8 1251.8,793.3 1261.8,787.5 1271.7,793.3"/><path d="M1261.8 799.0 L1261.8 810.5 M1261.8 799.0 L1271.7 793.3 M1261.8 799.0 L1251.8 793.3"/><polygon points="1291.7,804.8 1281.7,810.5 1271.7,804.8 1271.7,793.3 1281.7,787.5 1291.7,793.3"/><path d="M1281.7 799.0 L1281.7 810.5 M1281.7 799.0 L1291.7 793.3 M1281.7 799.0 L1271.7 793.3"/><polygon points="1311.6,804.8 1301.6,810.5 1291.7,804.8 1291.7,793.3 1301.6,787.5 1311.6,793.3"/><path d="M1301.6 799.0 L1301.6 810.5 M1301.6 799.0 L1311.6 793.3 M1301.6 799.0 L1291.7 793.3"/><polygon points="1331.5,804.8 1321.5,810.5 1311.6,804.8 1311.6,793.3 1321.5,787.5 1331.5,793.3"/><path d="M1321.5 799.0 L1321.5 810.5 M1321.5 799.0 L1331.5 793.3 M1321.5 799.0 L1311.6 793.3"/><polygon points="1351.4,804.8 1341.5,810.5 1331.5,804.8 1331.5,793.3 1341.5,787.5 1351.4,793.3"/><path d="M1341.5 799.0 L1341.5 810.5 M1341.5 799.0 L1351.4 793.3 M1341.5 799.0 L1331.5 793.3"/><polygon points="1371.3,804.8 1361.4,810.5 1351.4,804.8 1351.4,793.3 1361.4,787.5 1371.3,793.3"/><path d="M1361.4 799.0 L1361.4 810.5 M1361.4 799.0 L1371.3 793.3 M1361.4 799.0 L1351.4 793.3"/><polygon points="1391.3,804.8 1381.3,810.5 1371.3,804.8 1371.3,793.3 1381.3,787.5 1391.3,793.3"/><path d="M1381.3 799.0 L1381.3 810.5 M1381.3 799.0 L1391.3 793.3 M1381.3 799.0 L1371.3 793.3"/><polygon points="1411.2,804.8 1401.2,810.5 1391.3,804.8 1391.3,793.3 1401.2,787.5 1411.2,793.3"/><path d="M1401.2 799.0 L1401.2 810.5 M1401.2 799.0 L1411.2 793.3 M1401.2 799.0 L1391.3 793.3"/><polygon points="1431.1,804.8 1421.1,810.5 1411.2,804.8 1411.2,793.3 1421.1,787.5 1431.1,793.3"/><path d="M1421.1 799.0 L1421.1 810.5 M1421.1 799.0 L1431.1 793.3 M1421.1 799.0 L1411.2 793.3"/><polygon points="1451.0,804.8 1441.1,810.5 1431.1,804.8 1431.1,793.3 1441.1,787.5 1451.0,793.3"/><path d="M1441.1 799.0 L1441.1 810.5 M1441.1 799.0 L1451.0 793.3 M1441.1 799.0 L1431.1 793.3"/><polygon points="1470.9,804.8 1461.0,810.5 1451.0,804.8 1451.0,793.3 1461.0,787.5 1470.9,793.3"/><path d="M1461.0 799.0 L1461.0 810.5 M1461.0 799.0 L1470.9 793.3 M1461.0 799.0 L1451.0 793.3"/><polygon points="1221.9,822.0 1212.0,827.8 1202.0,822.0 1202.0,810.5 1212.0,804.8 1221.9,810.5"/><path d="M1212.0 816.3 L1212.0 827.8 M1212.0 816.3 L1221.9 810.5 M1212.0 816.3 L1202.0 810.5"/><polygon points="1241.9,822.0 1231.9,827.8 1221.9,822.0 1221.9,810.5 1231.9,804.8 1241.9,810.5"/><path d="M1231.9 816.3 L1231.9 827.8 M1231.9 816.3 L1241.9 810.5 M1231.9 816.3 L1221.9 810.5"/><polygon points="1261.8,822.0 1251.8,827.8 1241.9,822.0 1241.9,810.5 1251.8,804.8 1261.8,810.5"/><path d="M1251.8 816.3 L1251.8 827.8 M1251.8 816.3 L1261.8 810.5 M1251.8 816.3 L1241.9 810.5"/><polygon points="1281.7,822.0 1271.7,827.8 1261.8,822.0 1261.8,810.5 1271.7,804.8 1281.7,810.5"/><path d="M1271.7 816.3 L1271.7 827.8 M1271.7 816.3 L1281.7 810.5 M1271.7 816.3 L1261.8 810.5"/><polygon points="1301.6,822.0 1291.7,827.8 1281.7,822.0 1281.7,810.5 1291.7,804.8 1301.6,810.5"/><path d="M1291.7 816.3 L1291.7 827.8 M1291.7 816.3 L1301.6 810.5 M1291.7 816.3 L1281.7 810.5"/><polygon points="1321.5,822.0 1311.6,827.8 1301.6,822.0 1301.6,810.5 1311.6,804.8 1321.5,810.5"/><path d="M1311.6 816.3 L1311.6 827.8 M1311.6 816.3 L1321.5 810.5 M1311.6 816.3 L1301.6 810.5"/><polygon points="1341.5,822.0 1331.5,827.8 1321.5,822.0 1321.5,810.5 1331.5,804.8 1341.5,810.5"/><path d="M1331.5 816.3 L1331.5 827.8 M1331.5 816.3 L1341.5 810.5 M1331.5 816.3 L1321.5 810.5"/><polygon points="1361.4,822.0 1351.4,827.8 1341.5,822.0 1341.5,810.5 1351.4,804.8 1361.4,810.5"/><path d="M1351.4 816.3 L1351.4 827.8 M1351.4 816.3 L1361.4 810.5 M1351.4 816.3 L1341.5 810.5"/><polygon points="1381.3,822.0 1371.3,827.8 1361.4,822.0 1361.4,810.5 1371.3,804.8 1381.3,810.5"/><path d="M1371.3 816.3 L1371.3 827.8 M1371.3 816.3 L1381.3 810.5 M1371.3 816.3 L1361.4 810.5"/><polygon points="1401.2,822.0 1391.3,827.8 1381.3,822.0 1381.3,810.5 1391.3,804.8 1401.2,810.5"/><path d="M1391.3 816.3 L1391.3 827.8 M1391.3 816.3 L1401.2 810.5 M1391.3 816.3 L1381.3 810.5"/><polygon points="1421.1,822.0 1411.2,827.8 1401.2,822.0 1401.2,810.5 1411.2,804.8 1421.1,810.5"/><path d="M1411.2 816.3 L1411.2 827.8 M1411.2 816.3 L1421.1 810.5 M1411.2 816.3 L1401.2 810.5"/><polygon points="1441.1,822.0 1431.1,827.8 1421.1,822.0 1421.1,810.5 1431.1,804.8 1441.1,810.5"/><path d="M1431.1 816.3 L1431.1 827.8 M1431.1 816.3 L1441.1 810.5 M1431.1 816.3 L1421.1 810.5"/><polygon points="1461.0,822.0 1451.0,827.8 1441.1,822.0 1441.1,810.5 1451.0,804.8 1461.0,810.5"/><path d="M1451.0 816.3 L1451.0 827.8 M1451.0 816.3 L1461.0 810.5 M1451.0 816.3 L1441.1 810.5"/><polygon points="1231.9,839.3 1221.9,845.0 1212.0,839.3 1212.0,827.8 1221.9,822.0 1231.9,827.8"/><path d="M1221.9 833.5 L1221.9 845.0 M1221.9 833.5 L1231.9 827.8 M1221.9 833.5 L1212.0 827.8"/><polygon points="1251.8,839.3 1241.9,845.0 1231.9,839.3 1231.9,827.8 1241.9,822.0 1251.8,827.8"/><path d="M1241.9 833.5 L1241.9 845.0 M1241.9 833.5 L1251.8 827.8 M1241.9 833.5 L1231.9 827.8"/><polygon points="1271.7,839.3 1261.8,845.0 1251.8,839.3 1251.8,827.8 1261.8,822.0 1271.7,827.8"/><path d="M1261.8 833.5 L1261.8 845.0 M1261.8 833.5 L1271.7 827.8 M1261.8 833.5 L1251.8 827.8"/><polygon points="1291.7,839.3 1281.7,845.0 1271.7,839.3 1271.7,827.8 1281.7,822.0 1291.7,827.8"/><path d="M1281.7 833.5 L1281.7 845.0 M1281.7 833.5 L1291.7 827.8 M1281.7 833.5 L1271.7 827.8"/><polygon points="1311.6,839.3 1301.6,845.0 1291.7,839.3 1291.7,827.8 1301.6,822.0 1311.6,827.8"/><path d="M1301.6 833.5 L1301.6 845.0 M1301.6 833.5 L1311.6 827.8 M1301.6 833.5 L1291.7 827.8"/><polygon points="1331.5,839.3 1321.5,845.0 1311.6,839.3 1311.6,827.8 1321.5,822.0 1331.5,827.8"/><path d="M1321.5 833.5 L1321.5 845.0 M1321.5 833.5 L1331.5 827.8 M1321.5 833.5 L1311.6 827.8"/><polygon points="1351.4,839.3 1341.5,845.0 1331.5,839.3 1331.5,827.8 1341.5,822.0 1351.4,827.8"/><path d="M1341.5 833.5 L1341.5 845.0 M1341.5 833.5 L1351.4 827.8 M1341.5 833.5 L1331.5 827.8"/><polygon points="1371.3,839.3 1361.4,845.0 1351.4,839.3 1351.4,827.8 1361.4,822.0 1371.3,827.8"/><path d="M1361.4 833.5 L1361.4 845.0 M1361.4 833.5 L1371.3 827.8 M1361.4 833.5 L1351.4 827.8"/><polygon points="1391.3,839.3 1381.3,845.0 1371.3,839.3 1371.3,827.8 1381.3,822.0 1391.3,827.8"/><path d="M1381.3 833.5 L1381.3 845.0 M1381.3 833.5 L1391.3 827.8 M1381.3 833.5 L1371.3 827.8"/><polygon points="1411.2,839.3 1401.2,845.0 1391.3,839.3 1391.3,827.8 1401.2,822.0 1411.2,827.8"/><path d="M1401.2 833.5 L1401.2 845.0 M1401.2 833.5 L1411.2 827.8 M1401.2 833.5 L1391.3 827.8"/><polygon points="1431.1,839.3 1421.1,845.0 1411.2,839.3 1411.2,827.8 1421.1,822.0 1431.1,827.8"/><path d="M1421.1 833.5 L1421.1 845.0 M1421.1 833.5 L1431.1 827.8 M1421.1 833.5 L1411.2 827.8"/><polygon points="1451.0,839.3 1441.1,845.0 1431.1,839.3 1431.1,827.8 1441.1,822.0 1451.0,827.8"/><path d="M1441.1 833.5 L1441.1 845.0 M1441.1 833.5 L1451.0 827.8 M1441.1 833.5 L1431.1 827.8"/><polygon points="1470.9,839.3 1461.0,845.0 1451.0,839.3 1451.0,827.8 1461.0,822.0 1470.9,827.8"/><path d="M1461.0 833.5 L1461.0 845.0 M1461.0 833.5 L1470.9 827.8 M1461.0 833.5 L1451.0 827.8"/><polygon points="1221.9,856.5 1212.0,862.3 1202.0,856.5 1202.0,845.0 1212.0,839.3 1221.9,845.0"/><path d="M1212.0 850.8 L1212.0 862.3 M1212.0 850.8 L1221.9 845.0 M1212.0 850.8 L1202.0 845.0"/><polygon points="1241.9,856.5 1231.9,862.3 1221.9,856.5 1221.9,845.0 1231.9,839.3 1241.9,845.0"/><path d="M1231.9 850.8 L1231.9 862.3 M1231.9 850.8 L1241.9 845.0 M1231.9 850.8 L1221.9 845.0"/><polygon points="1261.8,856.5 1251.8,862.3 1241.9,856.5 1241.9,845.0 1251.8,839.3 1261.8,845.0"/><path d="M1251.8 850.8 L1251.8 862.3 M1251.8 850.8 L1261.8 845.0 M1251.8 850.8 L1241.9 845.0"/><polygon points="1281.7,856.5 1271.7,862.3 1261.8,856.5 1261.8,845.0 1271.7,839.3 1281.7,845.0"/><path d="M1271.7 850.8 L1271.7 862.3 M1271.7 850.8 L1281.7 845.0 M1271.7 850.8 L1261.8 845.0"/><polygon points="1301.6,856.5 1291.7,862.3 1281.7,856.5 1281.7,845.0 1291.7,839.3 1301.6,845.0"/><path d="M1291.7 850.8 L1291.7 862.3 M1291.7 850.8 L1301.6 845.0 M1291.7 850.8 L1281.7 845.0"/><polygon points="1321.5,856.5 1311.6,862.3 1301.6,856.5 1301.6,845.0 1311.6,839.3 1321.5,845.0"/><path d="M1311.6 850.8 L1311.6 862.3 M1311.6 850.8 L1321.5 845.0 M1311.6 850.8 L1301.6 845.0"/><polygon points="1341.5,856.5 1331.5,862.3 1321.5,856.5 1321.5,845.0 1331.5,839.3 1341.5,845.0"/><path d="M1331.5 850.8 L1331.5 862.3 M1331.5 850.8 L1341.5 845.0 M1331.5 850.8 L1321.5 845.0"/><polygon points="1361.4,856.5 1351.4,862.3 1341.5,856.5 1341.5,845.0 1351.4,839.3 1361.4,845.0"/><path d="M1351.4 850.8 L1351.4 862.3 M1351.4 850.8 L1361.4 845.0 M1351.4 850.8 L1341.5 845.0"/><polygon points="1381.3,856.5 1371.3,862.3 1361.4,856.5 1361.4,845.0 1371.3,839.3 1381.3,845.0"/><path d="M1371.3 850.8 L1371.3 862.3 M1371.3 850.8 L1381.3 845.0 M1371.3 850.8 L1361.4 845.0"/><polygon points="1401.2,856.5 1391.3,862.3 1381.3,856.5 1381.3,845.0 1391.3,839.3 1401.2,845.0"/><path d="M1391.3 850.8 L1391.3 862.3 M1391.3 850.8 L1401.2 845.0 M1391.3 850.8 L1381.3 845.0"/><polygon points="1421.1,856.5 1411.2,862.3 1401.2,856.5 1401.2,845.0 1411.2,839.3 1421.1,845.0"/><path d="M1411.2 850.8 L1411.2 862.3 M1411.2 850.8 L1421.1 845.0 M1411.2 850.8 L1401.2 845.0"/><polygon points="1441.1,856.5 1431.1,862.3 1421.1,856.5 1421.1,845.0 1431.1,839.3 1441.1,845.0"/><path d="M1431.1 850.8 L1431.1 862.3 M1431.1 850.8 L1441.1 845.0 M1431.1 850.8 L1421.1 845.0"/><polygon points="1461.0,856.5 1451.0,862.3 1441.1,856.5 1441.1,845.0 1451.0,839.3 1461.0,845.0"/><path d="M1451.0 850.8 L1451.0 862.3 M1451.0 850.8 L1461.0 845.0 M1451.0 850.8 L1441.1 845.0"/><polygon points="1231.9,873.8 1221.9,879.5 1212.0,873.8 1212.0,862.3 1221.9,856.5 1231.9,862.3"/><path d="M1221.9 868.0 L1221.9 879.5 M1221.9 868.0 L1231.9 862.3 M1221.9 868.0 L1212.0 862.3"/><polygon points="1251.8,873.8 1241.9,879.5 1231.9,873.8 1231.9,862.3 1241.9,856.5 1251.8,862.3"/><path d="M1241.9 868.0 L1241.9 879.5 M1241.9 868.0 L1251.8 862.3 M1241.9 868.0 L1231.9 862.3"/><polygon points="1271.7,873.8 1261.8,879.5 1251.8,873.8 1251.8,862.3 1261.8,856.5 1271.7,862.3"/><path d="M1261.8 868.0 L1261.8 879.5 M1261.8 868.0 L1271.7 862.3 M1261.8 868.0 L1251.8 862.3"/><polygon points="1291.7,873.8 1281.7,879.5 1271.7,873.8 1271.7,862.3 1281.7,856.5 1291.7,862.3"/><path d="M1281.7 868.0 L1281.7 879.5 M1281.7 868.0 L1291.7 862.3 M1281.7 868.0 L1271.7 862.3"/><polygon points="1311.6,873.8 1301.6,879.5 1291.7,873.8 1291.7,862.3 1301.6,856.5 1311.6,862.3"/><path d="M1301.6 868.0 L1301.6 879.5 M1301.6 868.0 L1311.6 862.3 M1301.6 868.0 L1291.7 862.3"/><polygon points="1331.5,873.8 1321.5,879.5 1311.6,873.8 1311.6,862.3 1321.5,856.5 1331.5,862.3"/><path d="M1321.5 868.0 L1321.5 879.5 M1321.5 868.0 L1331.5 862.3 M1321.5 868.0 L1311.6 862.3"/><polygon points="1351.4,873.8 1341.5,879.5 1331.5,873.8 1331.5,862.3 1341.5,856.5 1351.4,862.3"/><path d="M1341.5 868.0 L1341.5 879.5 M1341.5 868.0 L1351.4 862.3 M1341.5 868.0 L1331.5 862.3"/><polygon points="1371.3,873.8 1361.4,879.5 1351.4,873.8 1351.4,862.3 1361.4,856.5 1371.3,862.3"/><path d="M1361.4 868.0 L1361.4 879.5 M1361.4 868.0 L1371.3 862.3 M1361.4 868.0 L1351.4 862.3"/><polygon points="1391.3,873.8 1381.3,879.5 1371.3,873.8 1371.3,862.3 1381.3,856.5 1391.3,862.3"/><path d="M1381.3 868.0 L1381.3 879.5 M1381.3 868.0 L1391.3 862.3 M1381.3 868.0 L1371.3 862.3"/><polygon points="1411.2,873.8 1401.2,879.5 1391.3,873.8 1391.3,862.3 1401.2,856.5 1411.2,862.3"/><path d="M1401.2 868.0 L1401.2 879.5 M1401.2 868.0 L1411.2 862.3 M1401.2 868.0 L1391.3 862.3"/><polygon points="1431.1,873.8 1421.1,879.5 1411.2,873.8 1411.2,862.3 1421.1,856.5 1431.1,862.3"/><path d="M1421.1 868.0 L1421.1 879.5 M1421.1 868.0 L1431.1 862.3 M1421.1 868.0 L1411.2 862.3"/><polygon points="1451.0,873.8 1441.1,879.5 1431.1,873.8 1431.1,862.3 1441.1,856.5 1451.0,862.3"/><path d="M1441.1 868.0 L1441.1 879.5 M1441.1 868.0 L1451.0 862.3 M1441.1 868.0 L1431.1 862.3"/><polygon points="1470.9,873.8 1461.0,879.5 1451.0,873.8 1451.0,862.3 1461.0,856.5 1470.9,862.3"/><path d="M1461.0 868.0 L1461.0 879.5 M1461.0 868.0 L1470.9 862.3 M1461.0 868.0 L1451.0 862.3"/><polygon points="1221.9,891.0 1212.0,896.8 1202.0,891.0 1202.0,879.5 1212.0,873.8 1221.9,879.5"/><path d="M1212.0 885.3 L1212.0 896.8 M1212.0 885.3 L1221.9 879.5 M1212.0 885.3 L1202.0 879.5"/><polygon points="1241.9,891.0 1231.9,896.8 1221.9,891.0 1221.9,879.5 1231.9,873.8 1241.9,879.5"/><path d="M1231.9 885.3 L1231.9 896.8 M1231.9 885.3 L1241.9 879.5 M1231.9 885.3 L1221.9 879.5"/><polygon points="1261.8,891.0 1251.8,896.8 1241.9,891.0 1241.9,879.5 1251.8,873.8 1261.8,879.5"/><path d="M1251.8 885.3 L1251.8 896.8 M1251.8 885.3 L1261.8 879.5 M1251.8 885.3 L1241.9 879.5"/><polygon points="1281.7,891.0 1271.7,896.8 1261.8,891.0 1261.8,879.5 1271.7,873.8 1281.7,879.5"/><path d="M1271.7 885.3 L1271.7 896.8 M1271.7 885.3 L1281.7 879.5 M1271.7 885.3 L1261.8 879.5"/><polygon points="1301.6,891.0 1291.7,896.8 1281.7,891.0 1281.7,879.5 1291.7,873.8 1301.6,879.5"/><path d="M1291.7 885.3 L1291.7 896.8 M1291.7 885.3 L1301.6 879.5 M1291.7 885.3 L1281.7 879.5"/><polygon points="1321.5,891.0 1311.6,896.8 1301.6,891.0 1301.6,879.5 1311.6,873.8 1321.5,879.5"/><path d="M1311.6 885.3 L1311.6 896.8 M1311.6 885.3 L1321.5 879.5 M1311.6 885.3 L1301.6 879.5"/><polygon points="1341.5,891.0 1331.5,896.8 1321.5,891.0 1321.5,879.5 1331.5,873.8 1341.5,879.5"/><path d="M1331.5 885.3 L1331.5 896.8 M1331.5 885.3 L1341.5 879.5 M1331.5 885.3 L1321.5 879.5"/><polygon points="1361.4,891.0 1351.4,896.8 1341.5,891.0 1341.5,879.5 1351.4,873.8 1361.4,879.5"/><path d="M1351.4 885.3 L1351.4 896.8 M1351.4 885.3 L1361.4 879.5 M1351.4 885.3 L1341.5 879.5"/><polygon points="1381.3,891.0 1371.3,896.8 1361.4,891.0 1361.4,879.5 1371.3,873.8 1381.3,879.5"/><path d="M1371.3 885.3 L1371.3 896.8 M1371.3 885.3 L1381.3 879.5 M1371.3 885.3 L1361.4 879.5"/><polygon points="1401.2,891.0 1391.3,896.8 1381.3,891.0 1381.3,879.5 1391.3,873.8 1401.2,879.5"/><path d="M1391.3 885.3 L1391.3 896.8 M1391.3 885.3 L1401.2 879.5 M1391.3 885.3 L1381.3 879.5"/><polygon points="1421.1,891.0 1411.2,896.8 1401.2,891.0 1401.2,879.5 1411.2,873.8 1421.1,879.5"/><path d="M1411.2 885.3 L1411.2 896.8 M1411.2 885.3 L1421.1 879.5 M1411.2 885.3 L1401.2 879.5"/><polygon points="1441.1,891.0 1431.1,896.8 1421.1,891.0 1421.1,879.5 1431.1,873.8 1441.1,879.5"/><path d="M1431.1 885.3 L1431.1 896.8 M1431.1 885.3 L1441.1 879.5 M1431.1 885.3 L1421.1 879.5"/><polygon points="1461.0,891.0 1451.0,896.8 1441.1,891.0 1441.1,879.5 1451.0,873.8 1461.0,879.5"/><path d="M1451.0 885.3 L1451.0 896.8 M1451.0 885.3 L1461.0 879.5 M1451.0 885.3 L1441.1 879.5"/></g><rect x="1262" y="738" width="120" height="90" fill="#fff" opacity="0.55"/><circle cx="1331.5" cy="781.8" r="96" fill="none" stroke="#A6A8AD" stroke-width="1"/><g fill="#9C9FA5" font-family="Liberation Sans"><text x="1269.5" y="761.7" font-size="22.5" font-weight="400" stroke="#9C9FA5" stroke-width="0.7" textLength="56" lengthAdjust="spacingAndGlyphs">kindle</text><text x="1269.5" y="784" font-size="22.5" textLength="57" lengthAdjust="spacingAndGlyphs">direct</text><text x="1269.5" y="805.5" font-size="22.5" textLength="108" lengthAdjust="spacingAndGlyphs">publishing</text><text x="1270" y="820.5" font-size="7.8" font-weight="700" textLength="123.6" lengthAdjust="spacingAndGlyphs">SELF-PUBLISH IN DIGITAL &amp; PRINT</text></g></svg>
<div class="abs" style="left:1900px;top:151px;width:20px;height:879px;background:#FBFBFB;border-left:1px solid #EFEFEF"></div>
<svg class="abs" style="left:1902px;top:156px" width="16" height="12" viewBox="0 0 16 12"><path d="M3 9 L8 3.5 L13 9 Z" fill="#9a9a9a"/></svg>
<svg class="abs" style="left:1902px;top:1012px" width="16" height="12" viewBox="0 0 16 12"><path d="M3 3 L8 8.5 L13 3 Z" fill="#9a9a9a"/></svg>
<div class="abs" style="left:1904px;top:299px;width:11px;height:462px;background:#8F8F8F;border-radius:6px"></div>
<!-- TAB STRIP -->
<div class="abs" style="left:0;top:0;width:1920px;height:60px;background:#FFDD5E"></div>
<div class="abs" style="left:8px;top:8px;width:35px;height:34px;background:#fff;border-radius:9px"></div>
<svg class="abs" style="left:18px;top:17px" width="16" height="16" viewBox="0 0 16 16"><path d="M3.5 5.5 L8 10 L12.5 5.5" fill="none" stroke="#1f1f1f" stroke-width="1.8"/></svg>
<!-- gmail icon -->
<svg class="abs" style="left:60px;top:17px" width="20" height="16" viewBox="0 0 20 16"><path d="M1 3 Q1 0.8 3 1.2 L5 2.6 V15 H2.5 Q1 15 1 13.5Z" fill="#4285F4"/><path d="M19 3 Q19 0.8 17 1.2 L15 2.6 V15 H17.5 Q19 15 19 13.5Z" fill="#34A853"/><path d="M1 3.2 Q1 0.8 3.2 1.4 L10 6.6 L16.8 1.4 Q19 0.8 19 3.2 L10 10.2Z" fill="#EA4335"/><path d="M15 2.6 L16.8 1.4 Q19 0.8 19 3.2 V5.2 L15 8Z" fill="#FBBC04"/><path d="M1 3.2 Q1 0.8 3.2 1.4 L5 2.6 V8 L1 5.2Z" fill="#C5221F"/></svg>
<div class="abs tabtxt" style="left:90px;top:17px;width:212px;overflow:hidden;-webkit-mask-image:linear-gradient(90deg,#000 180px,transparent 210px)">da Piero ZONA: informazioni pe</div>
<svg class="abs" style="left:313px;top:18px" width="14" height="14" viewBox="0 0 14 14"><path d="M2.5 2.5 L11.5 11.5 M11.5 2.5 L2.5 11.5" stroke="#1f1f1f" stroke-width="1.8"/></svg>
<!-- active tab -->
<div class="abs" style="left:348px;top:7px;width:289px;height:44px;background:#fff;border-radius:10px 10px 0 0"></div>
<div class="abs" style="left:338px;top:40px;width:10px;height:10px;background:radial-gradient(circle at 0 0,#FFDD5E 10px,#fff 10.5px)"></div>
<div class="abs" style="left:637px;top:40px;width:10px;height:10px;background:radial-gradient(circle at 100% 0,#FFDD5E 10px,#fff 10.5px)"></div>
<svg class="abs" style="left:357px;top:15px" width="20" height="20" viewBox="0 0 20 20"><rect width="20" height="20" fill="#232F3E"/><text x="2" y="12" font-family="Liberation Sans" font-weight="700" font-size="13" fill="#fff">a</text><path d="M2 15 Q10 19 17 14" stroke="#FF9900" stroke-width="2" fill="none"/><path d="M14 13 L18 13.5 L17 17" stroke="#FF9900" stroke-width="1.6" fill="none"/></svg>
<div class="abs tabtxt" style="left:388px;top:17px">Calcolatore copertina KDP</div>
<svg class="abs" style="left:610px;top:18px" width="14" height="14" viewBox="0 0 14 14"><path d="M2.5 2.5 L11.5 11.5 M11.5 2.5 L2.5 11.5" stroke="#1f1f1f" stroke-width="1.8"/></svg>
<svg class="abs" style="left:654px;top:16px" width="18" height="18" viewBox="0 0 18 18"><path d="M9 2 V16 M2 9 H16" stroke="#1f1f1f" stroke-width="2"/></svg>
<!-- window controls -->
<svg class="abs" style="left:1767px;top:15px" width="20" height="20" viewBox="0 0 20 20"><path d="M3 9.5 H16" stroke="#1f1f1f" stroke-width="1.2"/></svg>
<svg class="abs" style="left:1823px;top:15px" width="20" height="20" viewBox="0 0 20 20"><rect x="3.5" y="5.5" width="11" height="11" fill="none" stroke="#1f1f1f" stroke-width="1.2"/><path d="M6 5.5 V3.5 H16.5 V14 H14.5" fill="none" stroke="#1f1f1f" stroke-width="1.2"/></svg>
<svg class="abs" style="left:1880px;top:15px" width="20" height="20" viewBox="0 0 20 20"><path d="M3.5 3.5 L16.5 16.5 M16.5 3.5 L3.5 16.5" stroke="#1f1f1f" stroke-width="1.2"/></svg>

<!-- TOOLBAR -->
<div class="abs" style="left:0;top:50px;width:1920px;height:100px;background:#fff;border-radius:10px 10px 0 0"></div>
<div class="abs" style="left:0;top:150px;width:1920px;height:1px;background:#dcdcdc"></div>
<svg class="abs" style="left:17px;top:69px" width="20" height="20" viewBox="0 0 20 20"><path d="M17 10 H3.5 M9.5 3.5 L3 10 L9.5 16.5" fill="none" stroke="#1f1f1f" stroke-width="2"/></svg>
<svg class="abs" style="left:62px;top:69px" width="20" height="20" viewBox="0 0 20 20"><path d="M3 10 H16.5 M10.5 3.5 L17 10 L10.5 16.5" fill="none" stroke="#9a9a9a" stroke-width="1.6"/></svg>
<svg class="abs" style="left:107px;top:69px" width="20" height="20" viewBox="0 0 20 20"><path d="M16 10 A6 6 0 1 1 14 5.3" fill="none" stroke="#1f1f1f" stroke-width="2"/><path d="M11 3 H16.5 V8.5 Z" fill="#1f1f1f"/></svg>
<svg class="abs" style="left:152px;top:68px" width="20" height="20" viewBox="0 0 20 20"><path d="M3 18 V9 L10 3 L17 9 V18 H12 V12.5 H8 V18 Z" fill="none" stroke="#1f1f1f" stroke-width="2" stroke-linejoin="round"/></svg>
<div class="abs" style="left:195px;top:58px;width:1507px;height:42px;background:#E3E3E6;border-radius:21px"></div>
<div class="abs" style="left:201px;top:65px;width:29px;height:29px;background:#fff;border-radius:50%"></div>
<svg class="abs" style="left:205px;top:69px" width="21" height="21" viewBox="0 0 21 21"><circle cx="6" cy="6" r="2.6" fill="none" stroke="#1f1f1f" stroke-width="1.6"/><path d="M10 6 H17" stroke="#1f1f1f" stroke-width="1.8"/><circle cx="14.5" cy="14.5" r="2.6" fill="none" stroke="#1f1f1f" stroke-width="1.6"/><path d="M3.5 14.5 H10.5" stroke="#1f1f1f" stroke-width="1.8"/></svg>
<div class="abs" style="left:242px;top:69px;font-size:17.4px;color:#1f1f1f;white-space:nowrap">kdp.amazon.com<span style="color:#5b5b5e">/cover-calculator</span></div>
<svg class="abs" style="left:1444px;top:69px" width="22" height="22" viewBox="0 0 22 22"><circle cx="9" cy="9" r="6" fill="none" stroke="#5f6368" stroke-width="1.8"/><path d="M6 9 H12 M13.5 13.5 L19 19" stroke="#5f6368" stroke-width="1.8"/></svg>
<div class="abs" style="left:1480px;top:64px;width:167px;height:30px;background:#fff;border-radius:15px"></div>
<svg class="abs" style="left:1489px;top:69px" width="21" height="21" viewBox="0 0 21 21"><path d="M2.5 7 V4.5 Q2.5 3.5 3.5 3.5 H6.5 L8 2 H13 L14.5 3.5 H17.5 Q18.5 3.5 18.5 4.5 V7 M2.5 13 V15.5 Q2.5 17 3.5 17 H6 M18.5 13 V15.5 Q18.5 17 17.5 17 H15" fill="none" stroke="#1f1f1f" stroke-width="1.9"/><circle cx="10.5" cy="10.5" r="2.6" fill="#1f1f1f"/><circle cx="16.5" cy="16.5" r="2" fill="#1f1f1f"/></svg>
<div class="abs" style="left:1517px;top:72px;font-size:15.4px;font-weight:700;color:#1f1f1f;white-space:nowrap">Chiedi a Google</div>
<svg class="abs" style="left:1661px;top:68px" width="22" height="22" viewBox="0 0 24 24"><path d="M12 2.5 L14.9 9 L21.8 9.6 L16.6 14.2 L18.1 21 L12 17.4 L5.9 21 L7.4 14.2 L2.2 9.6 L9.1 9 Z" fill="#6C6400"/></svg>
<svg class="abs" style="left:1724px;top:67px" width="24" height="24" viewBox="0 0 24 24"><path d="M5 6 H9 V4.5 Q9 2.5 11 2.5 Q13 2.5 13 4.5 V6 H17 V10 H18.5 Q20.5 10 20.5 12 Q20.5 14 18.5 14 H17 V19.5 H5 V15 H6.5 Q8.5 15 8.5 13 Q8.5 11 6.5 11 H5 Z" fill="none" stroke="#1f1f1f" stroke-width="2" stroke-linejoin="round"/></svg>
<div class="abs" style="left:1767px;top:69px;width:3px;height:20px;background:#F5CD47;border-radius:1px"></div>
<svg class="abs" style="left:1790px;top:67px" width="24" height="24" viewBox="0 0 24 24"><path d="M12 3 V15 M6.5 10 L12 15.5 L17.5 10 M3.5 15 V20.5 H20.5 V15" fill="none" stroke="#1f1f1f" stroke-width="2.3"/></svg>
<svg class="abs" style="left:1834px;top:66px" width="26" height="26" viewBox="0 0 26 26"><circle cx="13.5" cy="13" r="12.5" fill="#F6F6FA"/><path d="M6.5 26 Q7.5 19.5 13.5 19.5 Q19.5 19.5 20.5 26 Z" fill="#3a3a3a"/><ellipse cx="13.3" cy="12.8" rx="5.4" ry="6.8" fill="#F2D2BC"/><path d="M7.6 12 Q6.5 3 13.6 3 Q20.6 3 19.6 11 Q19 7 13.5 7.2 Q8.6 7.2 7.6 12Z" fill="#A8A5AF"/><circle cx="11.2" cy="12.4" r="0.8" fill="#5a4030"/><circle cx="15.6" cy="12.4" r="0.8" fill="#5a4030"/></svg>
<svg class="abs" style="left:1882px;top:67px" width="20" height="24" viewBox="0 0 20 24"><circle cx="10.4" cy="4.6" r="2.1" fill="#1f1f1f"/><circle cx="10.4" cy="11.4" r="2.1" fill="#1f1f1f"/><circle cx="10.4" cy="18.5" r="2.1" fill="#1f1f1f"/></svg>

<!-- BOOKMARKS -->
<svg class="abs" style="left:15px;top:116px" width="19" height="19" viewBox="0 0 19 19"><g fill="none" stroke="#1f1f1f" stroke-width="2"><rect x="1" y="1" width="6.5" height="6.5"/><rect x="11.5" y="1" width="6.5" height="6.5"/><rect x="1" y="11.5" width="6.5" height="6.5"/><rect x="11.5" y="11.5" width="6.5" height="6.5"/></g></svg>
<div class="abs" style="left:53px;top:115px;width:2px;height:20px;background:#F5CD47"></div>
<svg class="abs" style="left:75px;top:117px" width="16" height="16" viewBox="0 0 48 48"><path fill="#EA4335" d="M24 9.5c3.54 0 6.71 1.22 9.21 3.6l6.85-6.85C35.9 2.38 30.47 0 24 0 14.62 0 6.51 5.38 2.56 13.22l7.98 6.19C12.43 13.72 17.74 9.5 24 9.5z"/><path fill="#4285F4" d="M46.98 24.55c0-1.57-.15-3.09-.38-4.55H24v9.02h12.94c-.58 2.96-2.26 5.48-4.78 7.18l7.73 6c4.51-4.18 7.09-10.36 7.09-17.65z"/><path fill="#FBBC05" d="M10.53 28.59c-.48-1.45-.76-2.99-.76-4.59s.27-3.14.76-4.59l-7.98-6.19C.92 16.46 0 20.12 0 24c0 3.88.92 7.54 2.56 10.78l7.97-6.19z"/><path fill="#34A853" d="M24 48c6.48 0 11.93-2.13 15.89-5.81l-7.73-6c-2.15 1.45-4.92 2.3-8.16 2.3-6.26 0-11.57-4.22-13.47-9.91l-7.98 6.19C6.51 42.62 14.62 48 24 48z"/></svg>

<div class="abs bm" style="left:100px">Google</div>
<svg class="abs" style="left:171px;top:117px" width="22" height="18" viewBox="0 0 22 18"><path d="M1 2.4 Q1 1 2.4 1 H8 L9.8 2.9 H18.7 Q20.1 2.9 20.1 4.3 V14.6 Q20.1 16 18.7 16 H2.4 Q1 16 1 14.6 Z" fill="none" stroke="#5f5f5f" stroke-width="1.8" stroke-linejoin="round"/></svg>
<div class="abs bm" style="left:201px">Media</div>
<svg class="abs" style="left:265px;top:117px" width="22" height="18" viewBox="0 0 22 18"><path d="M1 2.4 Q1 1 2.4 1 H8 L9.8 2.9 H18.7 Q20.1 2.9 20.1 4.3 V14.6 Q20.1 16 18.7 16 H2.4 Q1 16 1 14.6 Z" fill="none" stroke="#5f5f5f" stroke-width="1.8" stroke-linejoin="round"/></svg>
<div class="abs bm" style="left:296px">Utility</div>
<svg class="abs" style="left:356px;top:117px" width="22" height="18" viewBox="0 0 22 18"><path d="M1 2.4 Q1 1 2.4 1 H8 L9.8 2.9 H18.7 Q20.1 2.9 20.1 4.3 V14.6 Q20.1 16 18.7 16 H2.4 Q1 16 1 14.6 Z" fill="none" stroke="#5f5f5f" stroke-width="1.8" stroke-linejoin="round"/></svg>
<div class="abs bm" style="left:387px">Social</div>
<svg class="abs" style="left:447px;top:117px" width="22" height="18" viewBox="0 0 22 18"><path d="M1 2.4 Q1 1 2.4 1 H8 L9.8 2.9 H18.7 Q20.1 2.9 20.1 4.3 V14.6 Q20.1 16 18.7 16 H2.4 Q1 16 1 14.6 Z" fill="none" stroke="#5f5f5f" stroke-width="1.8" stroke-linejoin="round"/></svg>
<div class="abs bm" style="left:478px">Shopping</div>
<svg class="abs" style="left:565px;top:117px" width="22" height="18" viewBox="0 0 22 18"><path d="M1 2.4 Q1 1 2.4 1 H8 L9.8 2.9 H18.7 Q20.1 2.9 20.1 4.3 V14.6 Q20.1 16 18.7 16 H2.4 Q1 16 1 14.6 Z" fill="none" stroke="#5f5f5f" stroke-width="1.8" stroke-linejoin="round"/></svg>
<div class="abs bm" style="left:596px">Recipes</div>
<svg class="abs" style="left:667px;top:117px" width="22" height="18" viewBox="0 0 22 18"><path d="M1 2.4 Q1 1 2.4 1 H8 L9.8 2.9 H18.7 Q20.1 2.9 20.1 4.3 V14.6 Q20.1 16 18.7 16 H2.4 Q1 16 1 14.6 Z" fill="none" stroke="#5f5f5f" stroke-width="1.8" stroke-linejoin="round"/></svg>
<div class="abs bm" style="left:698px">Job</div>
<svg class="abs" style="left:745px;top:117px" width="22" height="18" viewBox="0 0 22 18"><path d="M1 2.4 Q1 1 2.4 1 H8 L9.8 2.9 H18.7 Q20.1 2.9 20.1 4.3 V14.6 Q20.1 16 18.7 16 H2.4 Q1 16 1 14.6 Z" fill="none" stroke="#5f5f5f" stroke-width="1.8" stroke-linejoin="round"/></svg>
<div class="abs bm" style="left:775px">Travels</div>
<svg class="abs" style="left:842px;top:117px" width="22" height="18" viewBox="0 0 22 18"><path d="M1 2.4 Q1 1 2.4 1 H8 L9.8 2.9 H18.7 Q20.1 2.9 20.1 4.3 V14.6 Q20.1 16 18.7 16 H2.4 Q1 16 1 14.6 Z" fill="none" stroke="#5f5f5f" stroke-width="1.8" stroke-linejoin="round"/></svg>
<div class="abs bm" style="left:873px">KDP</div>
<svg class="abs" style="left:920px;top:114px" width="22" height="22" viewBox="0 0 22 22"><path d="M13 6 A7 7 0 1 1 5 7.5" fill="none" stroke="#1f1f1f" stroke-width="2.2"/><path d="M3 5 L7 4.5 L6.5 9" fill="none" stroke="#1f1f1f" stroke-width="2"/><rect x="12.6" y="1" width="6" height="6" transform="rotate(45 15.6 4)" fill="#C8232C"/></svg>
<div class="abs bm" style="left:949px">ZONA WordPress</div>
<svg class="abs" style="left:1084px;top:114px" width="22" height="22" viewBox="0 0 22 22"><path d="M13 6 A7 7 0 1 1 5 7.5" fill="none" stroke="#1f1f1f" stroke-width="2.2"/><path d="M3 5 L7 4.5 L6.5 9" fill="none" stroke="#1f1f1f" stroke-width="2"/><rect x="12.6" y="1" width="6" height="6" transform="rotate(45 15.6 4)" fill="#C8232C"/></svg>
<div class="abs bm" style="left:1113px">ZONA</div>
<svg class="abs" style="left:1173px;top:115px" width="20" height="20" viewBox="0 0 20 20"><rect width="20" height="20" fill="#1A8FE3"/><path d="M6.5 2 V18" stroke="#fff" stroke-width="3" fill="none"/><path d="M8 13 L14.5 7.5 M9.5 11.8 L15 18" stroke="#fff" stroke-width="2.2" fill="none"/></svg>
<div class="abs bm" style="left:1201px">Kindle Cloud Reader</div>
<svg class="abs" style="left:1356px;top:115px" width="21" height="21" viewBox="0 0 21 21"><rect x="7" y="7" width="13" height="13" rx="1.5" fill="#ddd"/><path d="M11 11 L17 18 M17 11 L11 18" stroke="#777" stroke-width="1.3"/><rect x="0.5" y="0.5" width="13" height="14" rx="1.5" fill="#4A8AF4"/><text x="3" y="11" font-size="9" font-weight="700" fill="#fff" font-family="Liberation Sans">G</text></svg>
<div class="abs bm" style="left:1384px">Traduttore</div>
<svg class="abs" style="left:1472px;top:112px" width="22" height="24" viewBox="0 0 22 24"><text x="3.5" y="18" font-size="22" font-weight="700" fill="#111" font-family="Liberation Sans">a</text><path d="M2.5 17.5 Q10 22.5 18.5 17.8" stroke="#FF9900" stroke-width="2" fill="none"/><path d="M15.5 16.6 L19.3 17.2 L18.3 20.6" stroke="#FF9900" stroke-width="1.6" fill="none"/></svg>
<div class="abs bm" style="left:1500px">Amazon Photos</div>
<svg class="abs" style="left:1624px;top:114px" width="22" height="22" viewBox="0 0 22 22"><path d="M1.5 4.5 Q3 2.5 5 4 Q9 6 15 3.5 Q18.5 2 21 2.5 Q16 6 14 14 Q13 18 11.5 21 Q9 17 6 12 Q3.5 8 1.5 4.5Z" fill="none" stroke="#073590" stroke-width="1.6" stroke-linejoin="round"/><path d="M6.5 6.5 L11 17 M9.5 7 L12.5 15 M12.5 6.5 L13.8 12 M15.5 5 L15.3 8.5" stroke="#073590" stroke-width="1.3"/></svg>
<div class="abs bm" style="left:1653px">Ryanair</div>
<!-- TASKBAR -->
<div class="abs" style="left:0;top:1030px;width:1920px;height:50px;background:linear-gradient(90deg,#DCDCE0 0%,#DADADC 40%,#D9D8D7 54%,#DFDAD5 62%,#E6DCD2 72%,#E9DACD 100%)"></div>
<svg class="abs" style="left:20px;top:1045px" width="21" height="21" viewBox="0 0 21 21"><g fill="#111"><path d="M0 2.9 L8.5 1.7 V9.8 H0Z"/><path d="M9.6 1.55 L20.5 0 V9.8 H9.6Z"/><path d="M0 10.9 H8.5 V19 L0 17.9Z"/><path d="M9.6 10.9 H20.5 V20.8 L9.6 19.2Z"/></g></svg>
<div class="abs" style="left:61px;top:1031px;width:358px;height:49px;background:#fff;border:1px solid #D0D0D0;border-bottom:none"></div>
<svg class="abs" style="left:74px;top:1044px" width="24" height="24" viewBox="0 0 24 24"><circle cx="14" cy="9.5" r="6.3" fill="none" stroke="#222" stroke-width="1.6"/><path d="M9.5 14 L2.5 21" stroke="#222" stroke-width="1.8"/></svg>
<div class="abs t" style="left:110px;top:1044px;font-size:17.6px;line-height:22px;color:#333">Cerca</div>
<svg class="abs" style="left:439px;top:1044px" width="22" height="22" viewBox="0 0 22 22"><g fill="none" stroke="#111" stroke-width="1.6"><rect x="2" y="4.5" width="12" height="13"/><path d="M0 2 H16 M0 20 H16 M19.5 1 V6 M19.5 8.5 V13.5 M19.5 16 V21"/></g></svg>
<!-- edge -->
<svg class="abs" style="left:499px;top:1040px" width="30" height="30" viewBox="0 0 30 30"><defs><linearGradient id="eg1" x1="0" y1="0.2" x2="1" y2="0.6"><stop offset="0" stop-color="#26A6EA"/><stop offset="0.55" stop-color="#35C4B8"/><stop offset="1" stop-color="#62E04E"/></linearGradient><linearGradient id="eg2" x1="0" y1="0" x2="0.4" y2="1"><stop offset="0" stop-color="#1E8FE0"/><stop offset="1" stop-color="#0E6BCB"/></linearGradient></defs><path d="M0.3 16 Q0.5 0.3 15 0.3 Q29.7 0.3 29.7 14.5 Q29.7 21.5 24 22.5 Q18.5 23 17.8 17.5 Q17.5 11.5 12.5 10.8 Q4 10 0.3 16Z" fill="url(#eg1)"/><path d="M0.3 16 Q4 10 12.5 10.8 Q9 13 8.8 19 Q9 26.5 18 28 Q24 28.8 27.5 25.5 Q23.5 30 15 30 Q0.3 30 0.3 16Z" fill="url(#eg2)"/><path d="M8.8 19 Q9 13 12.5 10.8 Q14 11.1 15.2 12 Q11 15 12.5 20.5 Q14.5 26 21 26.3 Q25 26.3 27.5 25.5 Q24 28.8 18 28 Q9 26.5 8.8 19Z" fill="#0C4A9C"/></svg>
<!-- mail -->
<svg class="abs" style="left:561px;top:1041px" width="30" height="28" viewBox="0 0 30 28"><path d="M0 9 L15 0 L30 9 V27.5 H0Z" fill="#0A5DB3"/><path d="M3 9.5 H27 L15 17.5Z" fill="#F2F2F2"/><path d="M0 9 L15 19 L30 9 V27.5 H0Z" fill="#2FB6EE"/><path d="M0 27.5 L0 11 L30 27.5Z" fill="#1A8FE0"/></svg>
<!-- explorer -->
<svg class="abs" style="left:622px;top:1041px" width="30" height="27" viewBox="0 0 30 27"><path d="M1 2 Q1 1 2 1 H11 L13 3.5 H28 Q29 3.5 29 4.5 V24 Q29 25 28 25 H2 Q1 25 1 24Z" fill="#F5B92E"/><path d="M1 7 H29 V24 Q29 25 28 25 H2 Q1 25 1 24Z" fill="#FFD663"/><path d="M8 26 V16 H22 V26 H18 V20 H12 V26Z" fill="#2B88D8"/></svg>
<div class="abs" style="left:613px;top:1077px;width:51px;height:3px;background:#C42B3B"></div>
<!-- store -->
<svg class="abs" style="left:684px;top:1040px" width="30" height="30" viewBox="0 0 30 30"><path d="M10 7 V4 Q10 1.5 12.5 1.5 H17.5 Q20 1.5 20 4 V7" fill="none" stroke="#34A7F0" stroke-width="2"/><rect x="1" y="6" width="28" height="23" rx="4" fill="#1A4F8F"/><rect x="9.5" y="11" width="5" height="5" fill="#F25022"/><rect x="15.5" y="11" width="5" height="5" fill="#7FBA00"/><rect x="9.5" y="17" width="5" height="5" fill="#00A4EF"/><rect x="15.5" y="17" width="5" height="5" fill="#FFB900"/></svg>
<!-- control panel -->
<svg class="abs" style="left:748px;top:1046px" width="28" height="18" viewBox="0 0 28 18"><defs><linearGradient id="cpg" x1="0" y1="0" x2="0" y2="1"><stop offset="0" stop-color="#7FD0F7"/><stop offset="1" stop-color="#3FA8EA"/></linearGradient></defs><rect x="0.5" y="0.5" width="26.5" height="17" rx="1" fill="url(#cpg)" stroke="#2F8BD6" stroke-width="1"/><circle cx="9" cy="7.2" r="4.3" fill="#EAF6FD" stroke="#fff" stroke-width="0.6"/><circle cx="9" cy="7.2" r="3.4" fill="#49A8E5"/><path d="M9 7.2 V3.8 A3.4 3.4 0 0 1 12.4 7.2Z" fill="#F5B11F"/><path d="M18.5 4 H24 M18.5 7.2 H24 M18.5 10.3 H24" stroke="#EAF6FD" stroke-width="1.7"/><path d="M4 14.3 H12" stroke="#F5A623" stroke-width="1.2"/><path d="M15 14.3 H23" stroke="#1E78C8" stroke-width="1.2"/><circle cx="13.5" cy="14.3" r="1" fill="#fff"/></svg>
<!-- solitaire -->
<svg class="abs" style="left:808px;top:1040px" width="32" height="31" viewBox="0 0 32 31"><rect x="12" y="3" width="15" height="22" rx="1.5" transform="rotate(12 19.5 14)" fill="#1E7BD4"/><rect x="9" y="4" width="15" height="23" rx="1.5" transform="rotate(4 16.5 15.5)" fill="#45B2F0"/><rect x="3.5" y="6" width="16" height="23" rx="1.5" transform="rotate(-9 11.5 17.5)" fill="#F4F4F4" stroke="#bdbdbd" stroke-width="0.5"/><path d="M11.5 9.5 Q4.5 16 6 19.5 Q7.5 22 10.5 20 L9.5 24 H13.5 L12.5 20 Q15.5 22 17 19.5 Q18.5 16 11.5 9.5Z" fill="#111"/><circle cx="4.6" cy="8.4" r="0.9" fill="#111"/><circle cx="17.2" cy="27" r="0.9" fill="#111"/><path d="M24 2 V11 M19.5 6.5 H28.5" stroke="#2A86D8" stroke-width="3.6"/><path d="M24 2.6 V10.4 M20.1 6.5 H27.9" stroke="#fff" stroke-width="1.8"/></svg>
<!-- photoshop -->
<svg class="abs" style="left:872px;top:1040px" width="28" height="28" viewBox="0 0 28 28"><rect x="0" y="0" width="28" height="27" fill="#8CC4F4"/><rect x="1.6" y="1.6" width="24.8" height="23.8" fill="#1C1E5C"/><text x="4.3" y="19.6" font-family="Liberation Sans" font-weight="700" font-size="15" fill="#80BEF6" letter-spacing="-0.3">Ps</text></svg>
<div class="abs" style="left:861px;top:1077px;width:51px;height:3px;background:#C42B3B"></div>
<!-- whatsapp -->
<svg class="abs" style="left:931px;top:1039px" width="42" height="34" viewBox="0 0 42 34"><path d="M8.2 24.5 A13.2 13.2 0 1 1 12.5 28" fill="none" stroke="#1F8E3D" stroke-width="2.6"/><path d="M9.6 22.5 L5.5 30.5 L14.5 27.2 Z" fill="#1F8E3D"/><path d="M11 10.5 Q11.5 8.3 13.3 8.5 L15 12 Q14.6 13.3 13.8 13.9 Q15.6 17.6 19.4 19.6 Q20.2 18.6 21.5 18.1 L24.7 19.9 Q24.7 21.8 23 22.8 Q17.5 23.8 13 18 Q10 14 11 10.5Z" fill="#1F8E3D"/><circle cx="31.5" cy="24.5" r="8.6" fill="#e2e2e2" stroke="#3a3a3a" stroke-width="1"/><text x="31.5" y="29.3" text-anchor="middle" font-family="Liberation Sans" font-size="13" fill="#111">1</text></svg>
<!-- chrome -->
<div class="abs" style="left:980px;top:1030px;width:61px;height:50px;background:#EFEFEF"></div>
<svg class="abs" style="left:994px;top:1039px" width="31" height="31" viewBox="-15.5 -15.5 31 31"><path d="M0 0 L-13.42 -7.75 A15.5 15.5 0 0 1 13.42 -7.75 Z" fill="#DB4437"/><path d="M0 0 L13.42 -7.75 A15.5 15.5 0 0 1 0 15.5 Z" fill="#FFCD40"/><path d="M0 0 L0 15.5 A15.5 15.5 0 0 1 -13.42 -7.75 Z" fill="#0F9D58"/><path d="M0 -7 H13.42 L9 1 Z" fill="#DB4437"/><path d="M6 3.5 L0 15.5 L-3 6 Z" fill="#FFCD40"/><path d="M-6 3.5 L-13.42 -7.75 L-4 -6 Z" fill="#0F9D58"/><circle r="7.2" fill="#fff"/><circle r="5.6" fill="#1A73E8"/></svg>
<div class="abs" style="left:980px;top:1077px;width:61px;height:3px;background:#C42B3B"></div>
<!-- tray -->
<svg class="abs" style="left:1378px;top:1044px" width="32" height="22" viewBox="0 0 32 22"><defs><linearGradient id="cg" x1="0" y1="0" x2="0" y2="1"><stop offset="0" stop-color="#A9D3FB"/><stop offset="1" stop-color="#5C9FE6"/></linearGradient></defs><path d="M6 21 Q0.5 21 0.5 15.5 Q0.5 10.5 5.5 10 Q6.5 3 13.5 2.5 Q20 2.5 22 8.5 Q25 7 28 9.5 Q31.5 12.5 31 16.5 Q30.5 21 26 21Z" fill="url(#cg)"/></svg>
<div class="abs t" style="left:1420px;top:1044px;font-size:17.6px;line-height:24px;color:#111;white-space:pre">10°C  Nuvoloso</div>
<svg class="abs" style="left:1572px;top:1046px" width="20" height="16" viewBox="0 0 20 16"><path d="M2.5 11.5 L10 4 L17.5 11.5" fill="none" stroke="#111" stroke-width="1.4"/></svg>
<svg class="abs" style="left:1602px;top:1044px" width="20" height="22" viewBox="0 0 20 22"><rect x="1" y="6" width="10.5" height="11" rx="2" fill="none" stroke="#111" stroke-width="1.3"/><path d="M12 9.5 L17 7 V16 L12 13.5Z" fill="none" stroke="#111" stroke-width="1.3"/><path d="M4 3.5 Q7 1 10 3.5 M4 19.5 Q7 22 10 19.5" fill="none" stroke="#111" stroke-width="1.1"/></svg>
<svg class="abs" style="left:1630px;top:1046px" width="24" height="18" viewBox="0 0 24 18"><rect x="3" y="4" width="19" height="11" fill="#111"/><rect x="4.5" y="5.5" width="16" height="8" fill="#111"/><path d="M1 5 V8 M3.5 1 V4 M6.5 1 V4" stroke="#111" stroke-width="1.3"/></svg>
<svg class="abs" style="left:1661px;top:1044px" width="24" height="20" viewBox="0 0 24 20"><g fill="none" stroke="#111" stroke-width="1.4"><path d="M1.5 17 A16 16 0 0 1 18 1.5"/><path d="M5 17 A12.5 12.5 0 0 1 18 5"/><path d="M8.5 17 A9 9 0 0 1 18 8.5"/><path d="M12 17 A5.5 5.5 0 0 1 18 12"/></g><circle cx="17" cy="17" r="1.8" fill="#111"/></svg>
<svg class="abs" style="left:1690px;top:1044px" width="24" height="22" viewBox="0 0 24 22"><path d="M1.5 7.5 H5.5 L11 2.5 V19.5 L5.5 14.5 H1.5Z" fill="none" stroke="#111" stroke-width="1.3"/><path d="M14 8 Q16 11 14 14 M16.5 5.5 Q20 11 16.5 16.5" fill="none" stroke="#111" stroke-width="1.3"/><path d="M19.5 3 Q24 11 19.5 19" fill="none" stroke="#999" stroke-width="1.2"/></svg>
<div class="abs t" style="left:1700px;top:1032.5px;width:78px;text-align:center;font-size:15px;line-height:23px;color:#111">ITA<br>142</div>
<div class="abs t" style="left:1760px;top:1032.5px;width:96px;text-align:center;font-size:15px;line-height:23px;color:#111">16:55<br>16/02/2026</div>
<svg class="abs" style="left:1867px;top:1043px" width="34" height="34" viewBox="0 0 34 34"><path d="M2 2 H23 V17 H12 L7 21 V17 H2Z" fill="#111"/><path d="M6 6.5 H19 M6 10 H19 M6 13.5 H15" stroke="#fff" stroke-width="1.4"/><circle cx="21" cy="21.5" r="10" fill="#e4e4e4" stroke="#777" stroke-width="1"/><text x="21" y="26.5" text-anchor="middle" font-family="Liberation Sans" font-size="14" fill="#111">3</text></svg>
<div class="abs" style="left:1914px;top:1030px;width:1px;height:50px;background:#9a9a9a"></div>

</body></html>
